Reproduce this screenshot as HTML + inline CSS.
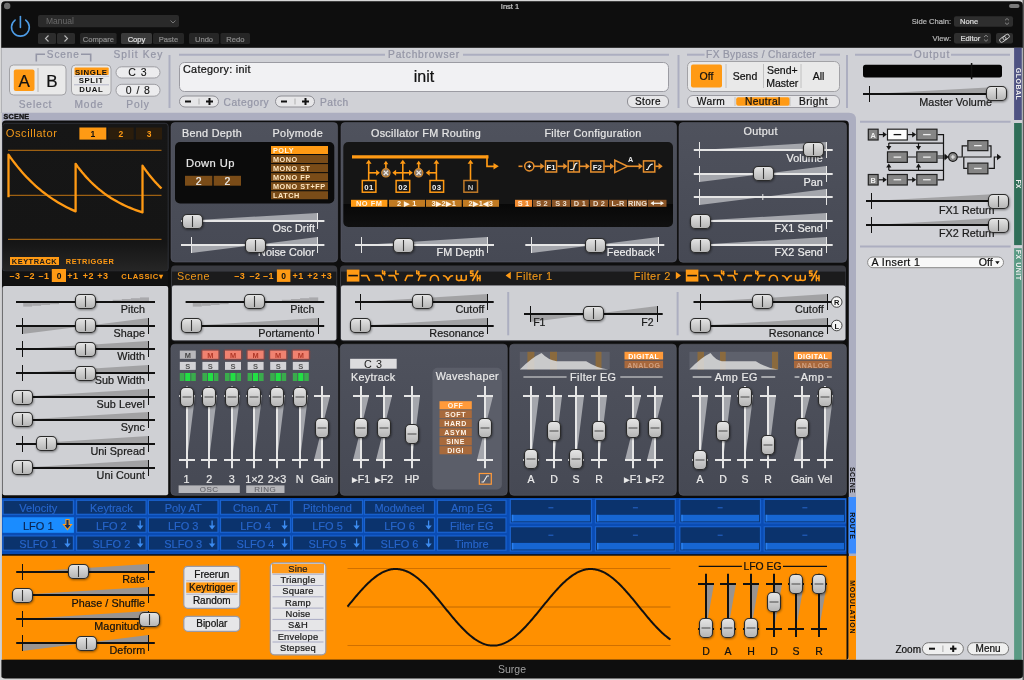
<!DOCTYPE html>
<html><head><meta charset="utf-8"><style>
html,body{margin:0;padding:0;background:#0d0d0d;overflow:hidden;width:1024px;height:680px}
svg{display:block;font-family:"Liberation Sans",sans-serif;will-change:transform}
</style></head><body>
<svg width="1024" height="680" viewBox="0 0 1024 680">
<defs>
<linearGradient id="hg" x1="0" y1="0" x2="0" y2="1"><stop offset="0" stop-color="#e6e6e6"/><stop offset="1" stop-color="#b4b4b4"/></linearGradient>
<linearGradient id="vg" x1="0" y1="0" x2="0" y2="1"><stop offset="0" stop-color="#e6e6e6"/><stop offset="1" stop-color="#b4b4b4"/></linearGradient>
<linearGradient id="oscbg" x1="0" y1="0" x2="0" y2="1"><stop offset="0" stop-color="#161616"/><stop offset="0.8" stop-color="#151515"/><stop offset="1" stop-color="#262626"/></linearGradient>
<linearGradient id="fmbg" x1="0" y1="0" x2="0" y2="1"><stop offset="0" stop-color="#151515"/><stop offset="0.73" stop-color="#151515"/><stop offset="0.735" stop-color="#080808"/><stop offset="1" stop-color="#101010"/></linearGradient>
<linearGradient id="pan" x1="0" y1="0" x2="0" y2="1"><stop offset="0" stop-color="#4f525d"/><stop offset="1" stop-color="#464954"/></linearGradient>
<filter id="sh" x="-30%" y="-30%" width="160%" height="160%"><feDropShadow dx="0.5" dy="1" stdDeviation="0.8" flood-color="#000" flood-opacity="0.45"/></filter>
</defs>
<rect x="0" y="0" width="1024" height="680" fill="#d6d6d6"/>
<rect x="1022.6" y="0" width="1.4" height="680" fill="#5a5a5a"/>
<rect x="1.2" y="1.2" width="1021.6" height="677.4" fill="#0e0e0e" rx="4"/>
<circle cx="7.2" cy="6" r="3.2" fill="#6e6e6e"/>
<text x="510" y="9" font-size="7.5" fill="#c8c8c8" text-anchor="middle" stroke="#c8c8c8" stroke-width="0.22">Inst 1</text>
<rect x="1009" y="4" width="10.5" height="4" fill="#7a7a7a" rx="2"/>
<g>
<path d="M 15.1 20.05 A 8.9 8.9 0 1 0 25.7 20.05" stroke="#4d9ce6" stroke-width="1.6" fill="none" stroke-linecap="round"/>
<line x1="20.4" y1="16.6" x2="20.4" y2="27.5" stroke="#4d9ce6" stroke-width="1.6" stroke-linecap="round"/>
<rect x="38" y="15" width="141" height="12.3" fill="#2a2a2a" rx="2"/>
<text x="46" y="24.4" font-size="8.5" fill="#6a6a6a">Manual</text>
<path d="M 170.5 20.5 L 173 23 L 175.5 20.5" stroke="#777" stroke-width="1" fill="none"/>
<rect x="38" y="33" width="18" height="11" fill="#2c2c2c" rx="1.5"/>
<rect x="57" y="33" width="18" height="11" fill="#2c2c2c" rx="1.5"/>
<path d="M 48.5 35.5 L 45.5 38.5 L 48.5 41.5" stroke="#bbb" stroke-width="1.1" fill="none"/>
<path d="M 64.5 35.5 L 67.5 38.5 L 64.5 41.5" stroke="#bbb" stroke-width="1.1" fill="none"/>
<rect x="80" y="33" width="36.6" height="11" fill="#262626" rx="1.5"/>
<text x="98.3" y="41.7" font-size="7.6" fill="#8a8a8a" text-anchor="middle" stroke="#8a8a8a" stroke-width="0.22">Compare</text>
<rect x="121" y="33" width="31" height="11" fill="#3a3a3a" rx="1.5"/>
<text x="136.5" y="41.7" font-size="7.6" fill="#e0e0e0" text-anchor="middle" stroke="#e0e0e0" stroke-width="0.22">Copy</text>
<rect x="153" y="33" width="31" height="11" fill="#262626" rx="1.5"/>
<text x="168.5" y="41.7" font-size="7.6" fill="#8a8a8a" text-anchor="middle" stroke="#8a8a8a" stroke-width="0.22">Paste</text>
<rect x="189" y="33" width="30" height="11" fill="#262626" rx="1.5"/>
<text x="204" y="41.7" font-size="7.6" fill="#8a8a8a" text-anchor="middle" stroke="#8a8a8a" stroke-width="0.22">Undo</text>
<rect x="220.5" y="33" width="29.5" height="11" fill="#262626" rx="1.5"/>
<text x="235.3" y="41.7" font-size="7.6" fill="#8a8a8a" text-anchor="middle" stroke="#8a8a8a" stroke-width="0.22">Redo</text>
<text x="951" y="24.4" font-size="7.6" fill="#b5b5b5" text-anchor="end" stroke="#b5b5b5" stroke-width="0.22">Side Chain:</text>
<rect x="954" y="16.2" width="59" height="10.5" fill="#2e2e2e" rx="2"/>
<text x="960" y="24.4" font-size="7.6" fill="#dddddd" stroke="#dddddd" stroke-width="0.22">None</text>
<path d="M 1005 20.3 L 1007 18.5 L 1009 20.3 M 1005 22.7 L 1007 24.5 L 1009 22.7" stroke="#999" stroke-width="0.8" fill="none"/>
<text x="951" y="41" font-size="7.6" fill="#b5b5b5" text-anchor="end" stroke="#b5b5b5" stroke-width="0.22">View:</text>
<rect x="954" y="33" width="37" height="10.6" fill="#2e2e2e" rx="2"/>
<text x="960.5" y="41" font-size="7.6" fill="#dddddd" stroke="#dddddd" stroke-width="0.22">Editor</text>
<path d="M 984 37 L 986 35.2 L 988 37 M 984 39.5 L 986 41.3 L 988 39.5" stroke="#999" stroke-width="0.8" fill="none"/>
<rect x="996" y="33" width="17" height="10.6" fill="#2e2e2e" rx="2"/>
<g transform="translate(1004.5,38.3) rotate(-35)"><rect x="-5.5" y="-2" width="7" height="4" rx="2" fill="none" stroke="#d0d0d0" stroke-width="0.9"/><rect x="-1.5" y="-2" width="7" height="4" rx="2" fill="none" stroke="#d0d0d0" stroke-width="0.9"/></g>
</g>
<rect x="1.2" y="47.8" width="1021.6" height="612.2" fill="#d0d1d6"/>
<rect x="1014.1" y="47.8" width="7.7" height="72.2" fill="#4e5282"/>
<text transform="translate(1015.8,84) rotate(90)" font-size="7" font-weight="bold" fill="#eeeeee" text-anchor="middle" letter-spacing="0.5">GLOBAL</text>
<rect x="1014.1" y="123" width="7.7" height="122.1" fill="#2f6e58"/>
<text transform="translate(1015.8,184) rotate(90)" font-size="7" font-weight="bold" fill="#eeeeee" text-anchor="middle">FX</text>
<rect x="1014.1" y="248.2" width="7.7" height="411.8" fill="#5a9a84"/>
<text transform="translate(1015.8,265.2) rotate(90)" font-size="7" font-weight="bold" fill="#eeeeee" text-anchor="middle" letter-spacing="0.5">FX UNIT</text>
<text x="63.3" y="58" font-size="10" fill="#9496a6" text-anchor="middle" letter-spacing="0.9" stroke="#9496a6" stroke-width="0.22">Scene</text>
<path d="M 45 54.2 L 36.3 54.2 L 36.3 61.5" stroke="#9496a6" stroke-width="1.6" fill="none"/>
<path d="M 81 54.2 L 90.7 54.2 L 90.7 61.5" stroke="#9496a6" stroke-width="1.6" fill="none"/>
<text x="138.5" y="58" font-size="10.2" fill="#9496a6" text-anchor="middle" letter-spacing="1.1" stroke="#9496a6" stroke-width="0.22">Split Key</text>
<rect x="9.5" y="65" width="56.5" height="30" fill="#e9e9e9" rx="4" stroke="#a2a2a6" stroke-width="1"/>
<rect x="13.8" y="69.5" width="20.7" height="21.5" fill="#ff9a14" rx="2"/>
<line x1="38" y1="68" x2="38" y2="92" stroke="#b5b5b5" stroke-width="1"/>
<text x="24.2" y="87" font-size="17" fill="#111" text-anchor="middle" stroke="#111" stroke-width="0.22">A</text>
<text x="52" y="87" font-size="17" fill="#111" text-anchor="middle" stroke="#111" stroke-width="0.22">B</text>
<text x="35.5" y="108" font-size="10.2" fill="#9496a6" text-anchor="middle" letter-spacing="0.9" stroke="#9496a6" stroke-width="0.22">Select</text>
<rect x="71.5" y="65" width="39.5" height="30" fill="#e9e9e9" rx="4" stroke="#a2a2a6" stroke-width="1"/>
<rect x="74.5" y="67.5" width="34.2" height="7.5" fill="#ff9a14" rx="1"/>
<line x1="74" y1="76.3" x2="109" y2="76.3" stroke="#c2c4d2" stroke-width="1"/>
<line x1="74" y1="84.8" x2="109" y2="84.8" stroke="#b4b6c8" stroke-width="1"/>
<text x="91.3" y="74.5" font-size="7.8" fill="#111" text-anchor="middle" font-weight="bold" letter-spacing="0.6">SINGLE</text>
<text x="91.3" y="83.2" font-size="7.8" fill="#111" text-anchor="middle" font-weight="bold" letter-spacing="0.6">SPLIT</text>
<text x="91.3" y="91.8" font-size="7.8" fill="#111" text-anchor="middle" font-weight="bold" letter-spacing="0.6">DUAL</text>
<text x="89" y="108" font-size="10.2" fill="#9496a6" text-anchor="middle" letter-spacing="0.9" stroke="#9496a6" stroke-width="0.22">Mode</text>
<rect x="116" y="66.8" width="44" height="11.2" fill="#ececee" rx="5.6" stroke="#9d9da2" stroke-width="1"/>
<text x="138" y="76.2" font-size="10.5" fill="#111" text-anchor="middle" letter-spacing="1" stroke="#111" stroke-width="0.1">C 3</text>
<rect x="116" y="84.3" width="44" height="11.9" fill="#ececee" rx="5.8" stroke="#9d9da2" stroke-width="1"/>
<text x="138.3" y="94" font-size="10.5" fill="#111" text-anchor="middle" letter-spacing="0.9" stroke="#111" stroke-width="0.1">0 / 8</text>
<text x="138" y="108" font-size="10.2" fill="#9496a6" text-anchor="middle" letter-spacing="0.9" stroke="#9496a6" stroke-width="0.22">Poly</text>
<line x1="169.5" y1="55" x2="169.5" y2="108" stroke="#acaec0" stroke-width="2"/>
<text x="424" y="58" font-size="10.2" fill="#9496a6" text-anchor="middle" letter-spacing="0.8" stroke="#9496a6" stroke-width="0.22">Patchbrowser</text>
<line x1="179" y1="54.7" x2="385" y2="54.7" stroke="#acaec0" stroke-width="2"/>
<line x1="463" y1="54.7" x2="669" y2="54.7" stroke="#acaec0" stroke-width="2"/>
<rect x="179.5" y="62.5" width="489" height="29" fill="#f1f1f3" rx="5" stroke="#9b9ba2" stroke-width="1"/>
<text x="183" y="73.3" font-size="10.8" fill="#111" letter-spacing="0.3" stroke="#111" stroke-width="0.22">Category: init</text>
<text x="424" y="81.5" font-size="16" fill="#111" text-anchor="middle" stroke="#111" stroke-width="0.22">init</text>
<rect x="179.5" y="96" width="39" height="11" fill="#e6e6e8" rx="5.5" stroke="#8e8e94" stroke-width="1"/>
<line x1="199" y1="98.5" x2="199" y2="104.5" stroke="#b0b0b0" stroke-width="1"/>
<line x1="185" y1="101.5" x2="191" y2="101.5" stroke="#111" stroke-width="2"/>
<line x1="206" y1="101.5" x2="213" y2="101.5" stroke="#111" stroke-width="2"/>
<line x1="209.5" y1="98" x2="209.5" y2="105" stroke="#111" stroke-width="2"/>
<text x="223.5" y="106" font-size="10.2" fill="#9496a6" letter-spacing="0.55" stroke="#9496a6" stroke-width="0.22">Category</text>
<rect x="275.5" y="96" width="39" height="11" fill="#e6e6e8" rx="5.5" stroke="#8e8e94" stroke-width="1"/>
<line x1="295" y1="98.5" x2="295" y2="104.5" stroke="#b0b0b0" stroke-width="1"/>
<line x1="281" y1="101.5" x2="287" y2="101.5" stroke="#111" stroke-width="2"/>
<line x1="302" y1="101.5" x2="309" y2="101.5" stroke="#111" stroke-width="2"/>
<line x1="305.5" y1="98" x2="305.5" y2="105" stroke="#111" stroke-width="2"/>
<text x="320" y="106" font-size="10.2" fill="#9496a6" letter-spacing="0.55" stroke="#9496a6" stroke-width="0.22">Patch</text>
<rect x="627.5" y="95.5" width="41" height="12" fill="#e6e6e8" rx="5.5" stroke="#8e8e94" stroke-width="1"/>
<text x="648" y="105.3" font-size="10" fill="#111" text-anchor="middle" letter-spacing="0.4" stroke="#111" stroke-width="0.22">Store</text>
<line x1="678.5" y1="55" x2="678.5" y2="108" stroke="#acaec0" stroke-width="2"/>
<text x="761" y="58" font-size="10.2" fill="#9496a6" text-anchor="middle" letter-spacing="0.35" stroke="#9496a6" stroke-width="0.22">FX Bypass / Character</text>
<line x1="687" y1="54.7" x2="704.6" y2="54.7" stroke="#acaec0" stroke-width="2"/>
<line x1="819.7" y1="54.7" x2="840" y2="54.7" stroke="#acaec0" stroke-width="2"/>
<rect x="687.5" y="61.5" width="152" height="30" fill="#e9e9e9" rx="5" stroke="#a2a2a6" stroke-width="1"/>
<rect x="691" y="64.5" width="31" height="23" fill="#ff9a14" rx="2"/>
<line x1="726" y1="64" x2="726" y2="88" stroke="#c0c0c0" stroke-width="1"/>
<line x1="763.5" y1="64" x2="763.5" y2="88" stroke="#c0c0c0" stroke-width="1"/>
<line x1="801" y1="64" x2="801" y2="88" stroke="#c0c0c0" stroke-width="1"/>
<text x="706.5" y="79.8" font-size="10.5" fill="#111" text-anchor="middle" stroke="#111" stroke-width="0.22">Off</text>
<text x="745" y="79.8" font-size="10.5" fill="#111" text-anchor="middle" stroke="#111" stroke-width="0.22">Send</text>
<text x="782.3" y="74.2" font-size="10.5" fill="#111" text-anchor="middle" stroke="#111" stroke-width="0.22">Send+</text>
<text x="782.3" y="86.7" font-size="10.5" fill="#111" text-anchor="middle" stroke="#111" stroke-width="0.22">Master</text>
<text x="818.5" y="79.8" font-size="10.5" fill="#111" text-anchor="middle" stroke="#111" stroke-width="0.22">All</text>
<rect x="687.5" y="95.5" width="152" height="12" fill="#e6e6e8" rx="5.5" stroke="#9b9ba2" stroke-width="1"/>
<rect x="736.2" y="97.2" width="53.6" height="8.6" fill="#ff9a14" rx="2"/>
<line x1="735" y1="97" x2="735" y2="106" stroke="#c0c0c0" stroke-width="1"/>
<line x1="790" y1="97" x2="790" y2="106" stroke="#c0c0c0" stroke-width="1"/>
<text x="711" y="105.2" font-size="10.2" fill="#111" text-anchor="middle" letter-spacing="0.4" stroke="#111" stroke-width="0.22">Warm</text>
<text x="762.8" y="105.2" font-size="10.2" fill="#111" text-anchor="middle" letter-spacing="0.4" stroke="#111" stroke-width="0.22">Neutral</text>
<text x="813.5" y="105.2" font-size="10.2" fill="#111" text-anchor="middle" letter-spacing="0.4" stroke="#111" stroke-width="0.22">Bright</text>
<line x1="847" y1="55" x2="847" y2="108" stroke="#acaec0" stroke-width="2"/>
<text x="932" y="58" font-size="10.2" fill="#9496a6" text-anchor="middle" letter-spacing="1" stroke="#9496a6" stroke-width="0.22">Output</text>
<line x1="855" y1="54.7" x2="912" y2="54.7" stroke="#acaec0" stroke-width="2"/>
<line x1="951" y1="54.7" x2="1010" y2="54.7" stroke="#acaec0" stroke-width="2"/>
<rect x="863" y="64.7" width="139" height="12.8" fill="#050505" rx="2.5"/>
<line x1="971.6" y1="63" x2="971.6" y2="79.2" stroke="#111" stroke-width="1.5"/>
<polygon points="869.5,94 996.5,87 996.5,94" fill="#a2a2a4"/>
<line x1="863" y1="94" x2="1000" y2="94" stroke="#111" stroke-width="2"/>
<line x1="869.5" y1="86" x2="869.5" y2="102" stroke="#111" stroke-width="1"/>
<text x="992" y="105.8" font-size="10.8" fill="#1a1a1a" text-anchor="end" letter-spacing="0.05" stroke="#1a1a1a" stroke-width="0.22">Master Volume</text>
<g filter="url(#sh)">
<rect x="986.5" y="86.5" width="20" height="14" fill="url(#hg)" rx="4.5" stroke="#2a2a2a" stroke-width="1.1"/>
</g>
<line x1="996.5" y1="88" x2="996.5" y2="99" stroke="#383838" stroke-width="1.1"/>
<path d="M 0 112.8 L 849 112.8 Q 856 112.8 856 119.8 L 856 660 L 0 660 Z" fill="#acaec0"/>
<rect x="2" y="120.5" width="846.8" height="539.5" fill="#0e0e0e" rx="4"/>
<rect x="0" y="112.8" width="1.8" height="565.2" fill="#d2d2d2"/>
<text x="3.5" y="119.3" font-size="7.2" fill="#111" font-weight="bold" letter-spacing="0.2" stroke="#111" stroke-width="0.35">SCENE</text>
<text transform="translate(850,493.5) rotate(90)" font-size="7" font-weight="bold" fill="#111" text-anchor="end" letter-spacing="0.5">SCENE</text>
<rect x="2.5" y="123.3" width="165.7" height="148" fill="url(#oscbg)" rx="3" stroke="#2e3038" stroke-width="1"/>
<text x="5.8" y="136.6" font-size="11.2" fill="#f0981a" letter-spacing="0.5">Oscillator</text>
<rect x="79.4" y="127.5" width="26.9" height="12.1" fill="#ff9a14"/>
<rect x="108" y="127.5" width="25.7" height="12.1" fill="#2b1d0c"/>
<rect x="136" y="127.5" width="26" height="12.1" fill="#2b1d0c"/>
<text x="92.8" y="136.6" font-size="8.5" fill="#111" text-anchor="middle" font-weight="bold">1</text>
<text x="120.8" y="136.6" font-size="8.5" fill="#ff9a14" text-anchor="middle" font-weight="bold">2</text>
<text x="149" y="136.6" font-size="8.5" fill="#ff9a14" text-anchor="middle" font-weight="bold">3</text>
<line x1="8" y1="150.3" x2="161.5" y2="150.3" stroke="#c07412" stroke-width="1"/>
<line x1="8" y1="195.3" x2="161.5" y2="195.3" stroke="#c07412" stroke-width="1"/>
<line x1="8" y1="239.3" x2="161.5" y2="239.3" stroke="#c07412" stroke-width="1"/>
<path d="M 8.5 197.3 L 8.50 154.60 L 10.74 157.79 L 12.97 160.85 L 15.21 163.79 L 17.45 166.62 L 19.68 169.33 L 21.92 171.94 L 24.16 174.45 L 26.39 176.86 L 28.63 179.17 L 30.87 181.40 L 33.10 183.53 L 35.34 185.59 L 37.58 187.56 L 39.81 189.45 L 42.05 191.27 L 44.29 193.02 L 46.52 194.70 L 48.76 196.32 L 51.00 197.87 L 53.23 199.36 L 55.47 200.79 L 57.71 202.17 L 59.94 203.49 L 62.18 204.76 L 64.42 205.98 L 66.65 207.15 L 68.89 208.28 L 71.13 209.36 L 73.36 210.40 L 75.60 211.40 L 75.60 163.80 L 77.83 166.84 L 80.06 169.74 L 82.29 172.50 L 84.52 175.12 L 86.75 177.61 L 88.98 179.98 L 91.21 182.24 L 93.44 184.38 L 95.67 186.42 L 97.90 188.36 L 100.13 190.21 L 102.36 191.97 L 104.59 193.64 L 106.82 195.23 L 109.05 196.74 L 111.28 198.18 L 113.51 199.55 L 115.74 200.85 L 117.97 202.09 L 120.20 203.26 L 122.43 204.38 L 124.66 205.45 L 126.89 206.46 L 129.12 207.43 L 131.35 208.34 L 133.58 209.22 L 135.81 210.05 L 138.04 210.83 L 140.27 211.59 L 142.50 212.30 L 142.50 165.70 L 143.13 166.63 L 143.77 167.54 L 144.40 168.44 L 145.03 169.32 L 145.67 170.20 L 146.30 171.06 L 146.93 171.91 L 147.57 172.75 L 148.20 173.58 L 148.83 174.39 L 149.47 175.19 L 150.10 175.99 L 150.73 176.77 L 151.37 177.54 L 152.00 178.29 L 152.63 179.04 L 153.27 179.78 L 153.90 180.51 L 154.53 181.22 L 155.17 181.93 L 155.80 182.63 L 156.43 183.31 L 157.07 183.99 L 157.70 184.66 L 158.33 185.32 L 158.97 185.97 L 159.60 186.61 L 160.23 187.24 L 160.87 187.86 L 161.50 188.47" stroke="#ff9a14" stroke-width="2.3" fill="none" stroke-linejoin="round"/>
<rect x="10" y="257" width="49" height="8" fill="#ff9a14"/>
<text x="34.5" y="264.3" font-size="7.4" fill="#1a1a1a" text-anchor="middle" font-weight="bold" letter-spacing="0.55">KEYTRACK</text>
<text x="65.8" y="264.3" font-size="7.4" fill="#ff9a14" font-weight="bold" letter-spacing="0.5">RETRIGGER</text>
<rect x="2.5" y="271.3" width="165.7" height="14.3" fill="#121212"/>
<rect x="51.8" y="269" width="14.2" height="13" fill="#ff9a14"/>
<text x="15" y="279" font-size="9" fill="#ff9a14" text-anchor="middle" font-weight="bold" letter-spacing="0.5">–3</text>
<text x="29.5" y="279" font-size="9" fill="#ff9a14" text-anchor="middle" font-weight="bold" letter-spacing="0.5">–2</text>
<text x="44" y="279" font-size="9" fill="#ff9a14" text-anchor="middle" font-weight="bold" letter-spacing="0.5">–1</text>
<text x="73" y="279" font-size="9" fill="#ff9a14" text-anchor="middle" font-weight="bold" letter-spacing="0.5">+1</text>
<text x="88.5" y="279" font-size="9" fill="#ff9a14" text-anchor="middle" font-weight="bold" letter-spacing="0.5">+2</text>
<text x="103" y="279" font-size="9" fill="#ff9a14" text-anchor="middle" font-weight="bold" letter-spacing="0.5">+3</text>
<text x="59" y="279" font-size="8.5" fill="#111" text-anchor="middle" font-weight="bold">0</text>
<text x="163.5" y="279" font-size="7.6" fill="#ff9a14" text-anchor="end" font-weight="bold" letter-spacing="0.6">CLASSIC▾</text>
<rect x="2.5" y="286" width="165.7" height="209.3" fill="#cfd0d4" rx="2"/>
<rect x="23.2" y="303" width="8.95" height="3.6" fill="#a9a9ac"/>
<rect x="32.15" y="303" width="8.95" height="2.8" fill="#a9a9ac"/>
<rect x="41.1" y="303" width="8.95" height="2" fill="#a9a9ac"/>
<rect x="50.05" y="303" width="8.95" height="1.2" fill="#a9a9ac"/>
<rect x="112.7" y="299.8" width="9.07" height="1.2" fill="#a9a9ac"/>
<rect x="121.78" y="299" width="9.07" height="2" fill="#a9a9ac"/>
<rect x="130.85" y="298.2" width="9.07" height="2.8" fill="#a9a9ac"/>
<rect x="139.93" y="297.4" width="9.07" height="3.6" fill="#a9a9ac"/>
<line x1="16" y1="302" x2="155" y2="302" stroke="#111" stroke-width="2"/>
<text x="145" y="313" font-size="10.8" fill="#1a1a1a" text-anchor="end" letter-spacing="0.05" stroke="#1a1a1a" stroke-width="0.22">Pitch</text>
<g filter="url(#sh)">
<rect x="75.5" y="294.5" width="20" height="14" fill="url(#hg)" rx="4.5" stroke="#2a2a2a" stroke-width="1.1"/>
</g>
<line x1="85.5" y1="296" x2="85.5" y2="307" stroke="#383838" stroke-width="1.1"/>
<polygon points="22.5,326 22.5,334 85.5,326" fill="#a2a2a4"/>
<polygon points="85.5,326 148.5,318 148.5,326" fill="#a2a2a4"/>
<line x1="16" y1="326" x2="155" y2="326" stroke="#111" stroke-width="2"/>
<line x1="22.5" y1="318" x2="22.5" y2="334" stroke="#111" stroke-width="1"/>
<line x1="148.5" y1="318" x2="148.5" y2="334" stroke="#111" stroke-width="1"/>
<text x="145" y="337" font-size="10.8" fill="#1a1a1a" text-anchor="end" letter-spacing="0.05" stroke="#1a1a1a" stroke-width="0.22">Shape</text>
<g filter="url(#sh)">
<rect x="75.5" y="318.5" width="20" height="14" fill="url(#hg)" rx="4.5" stroke="#2a2a2a" stroke-width="1.1"/>
</g>
<line x1="85.5" y1="320" x2="85.5" y2="331" stroke="#383838" stroke-width="1.1"/>
<polygon points="22.5,349 148.5,341 148.5,349" fill="#a2a2a4"/>
<line x1="16" y1="349" x2="155" y2="349" stroke="#111" stroke-width="2"/>
<line x1="22.5" y1="341" x2="22.5" y2="357" stroke="#111" stroke-width="1"/>
<line x1="148.5" y1="341" x2="148.5" y2="357" stroke="#111" stroke-width="1"/>
<text x="145" y="360" font-size="10.8" fill="#1a1a1a" text-anchor="end" letter-spacing="0.05" stroke="#1a1a1a" stroke-width="0.22">Width</text>
<g filter="url(#sh)">
<rect x="75.5" y="342.5" width="20" height="14" fill="url(#hg)" rx="4.5" stroke="#2a2a2a" stroke-width="1.1"/>
</g>
<line x1="85.5" y1="344" x2="85.5" y2="355" stroke="#383838" stroke-width="1.1"/>
<polygon points="22.5,373 148.5,365 148.5,373" fill="#a2a2a4"/>
<line x1="16" y1="373" x2="155" y2="373" stroke="#111" stroke-width="2"/>
<line x1="22.5" y1="365" x2="22.5" y2="381" stroke="#111" stroke-width="1"/>
<line x1="148.5" y1="365" x2="148.5" y2="381" stroke="#111" stroke-width="1"/>
<text x="145" y="384" font-size="10.8" fill="#1a1a1a" text-anchor="end" letter-spacing="0.05" stroke="#1a1a1a" stroke-width="0.22">Sub Width</text>
<g filter="url(#sh)">
<rect x="75.5" y="366.5" width="20" height="14" fill="url(#hg)" rx="4.5" stroke="#2a2a2a" stroke-width="1.1"/>
</g>
<line x1="85.5" y1="368" x2="85.5" y2="379" stroke="#383838" stroke-width="1.1"/>
<polygon points="16,397 148.5,389 148.5,397" fill="#a2a2a4"/>
<line x1="16" y1="397" x2="155" y2="397" stroke="#111" stroke-width="2"/>
<line x1="148.5" y1="389" x2="148.5" y2="405" stroke="#111" stroke-width="1"/>
<text x="145" y="408" font-size="10.8" fill="#1a1a1a" text-anchor="end" letter-spacing="0.05" stroke="#1a1a1a" stroke-width="0.22">Sub Level</text>
<g filter="url(#sh)">
<rect x="12.5" y="390.5" width="20" height="14" fill="url(#hg)" rx="4.5" stroke="#2a2a2a" stroke-width="1.1"/>
</g>
<line x1="22.5" y1="392" x2="22.5" y2="403" stroke="#383838" stroke-width="1.1"/>
<polygon points="16,420 148.5,412 148.5,420" fill="#a2a2a4"/>
<line x1="16" y1="420" x2="155" y2="420" stroke="#111" stroke-width="2"/>
<line x1="148.5" y1="412" x2="148.5" y2="428" stroke="#111" stroke-width="1"/>
<text x="145" y="431" font-size="10.8" fill="#1a1a1a" text-anchor="end" letter-spacing="0.05" stroke="#1a1a1a" stroke-width="0.22">Sync</text>
<g filter="url(#sh)">
<rect x="12.5" y="412.5" width="20" height="14" fill="url(#hg)" rx="4.5" stroke="#2a2a2a" stroke-width="1.1"/>
</g>
<line x1="22.5" y1="414" x2="22.5" y2="425" stroke="#383838" stroke-width="1.1"/>
<polygon points="22.5,444 148.5,436 148.5,444" fill="#a2a2a4"/>
<line x1="16" y1="444" x2="155" y2="444" stroke="#111" stroke-width="2"/>
<line x1="22.5" y1="436" x2="22.5" y2="452" stroke="#111" stroke-width="1"/>
<line x1="148.5" y1="436" x2="148.5" y2="452" stroke="#111" stroke-width="1"/>
<text x="145" y="455" font-size="10.8" fill="#1a1a1a" text-anchor="end" letter-spacing="0.05" stroke="#1a1a1a" stroke-width="0.22">Uni Spread</text>
<g filter="url(#sh)">
<rect x="36.5" y="436.5" width="20" height="14" fill="url(#hg)" rx="4.5" stroke="#2a2a2a" stroke-width="1.1"/>
</g>
<line x1="46.5" y1="438" x2="46.5" y2="449" stroke="#383838" stroke-width="1.1"/>
<polygon points="16,468 148.5,460 148.5,468" fill="#a2a2a4"/>
<line x1="16" y1="468" x2="155" y2="468" stroke="#111" stroke-width="2"/>
<line x1="148.5" y1="460" x2="148.5" y2="476" stroke="#111" stroke-width="1"/>
<text x="145" y="479" font-size="10.8" fill="#1a1a1a" text-anchor="end" letter-spacing="0.05" stroke="#1a1a1a" stroke-width="0.22">Uni Count</text>
<g filter="url(#sh)">
<rect x="12.5" y="460.5" width="20" height="14" fill="url(#hg)" rx="4.5" stroke="#2a2a2a" stroke-width="1.1"/>
</g>
<line x1="22.5" y1="462" x2="22.5" y2="473" stroke="#383838" stroke-width="1.1"/>
<rect x="171" y="122.6" width="166.6" height="139.4" fill="url(#pan)" rx="4" stroke="#5a5d68" stroke-width="0.6"/>
<text x="182" y="136.5" font-size="10.8" fill="#e6e6e6" letter-spacing="0.3" stroke="#e6e6e6" stroke-width="0.22">Bend Depth</text>
<text x="323" y="136.5" font-size="10.8" fill="#e6e6e6" text-anchor="end" letter-spacing="0.3" stroke="#e6e6e6" stroke-width="0.22">Polymode</text>
<rect x="175" y="142" width="159.3" height="61.4" fill="#0b0b0b" rx="5"/>
<text x="186" y="167" font-size="11.2" fill="#e6e6e6" letter-spacing="0.4" stroke="#e6e6e6" stroke-width="0.22">Down Up</text>
<rect x="185" y="175.8" width="27.3" height="9.9" fill="#7a4c18"/>
<rect x="213.7" y="175.8" width="27.3" height="9.9" fill="#7a4c18"/>
<text x="198.7" y="185" font-size="10.5" fill="#eee" text-anchor="middle" stroke="#eee" stroke-width="0.22">2</text>
<text x="227.3" y="185" font-size="10.5" fill="#eee" text-anchor="middle" stroke="#eee" stroke-width="0.22">2</text>
<rect x="271" y="146" width="57" height="8" fill="#ff9a14"/>
<text x="273" y="153" font-size="7.3" fill="#fff5e0" font-weight="bold" letter-spacing="0.5">POLY</text>
<rect x="271" y="155.05" width="57" height="8" fill="#7a4c18"/>
<text x="273" y="162.05" font-size="7.3" fill="#ffe6c0" font-weight="bold" letter-spacing="0.5">MONO</text>
<rect x="271" y="164.1" width="57" height="8" fill="#7a4c18"/>
<text x="273" y="171.1" font-size="7.3" fill="#ffe6c0" font-weight="bold" letter-spacing="0.5">MONO ST</text>
<rect x="271" y="173.15" width="57" height="8" fill="#7a4c18"/>
<text x="273" y="180.15" font-size="7.3" fill="#ffe6c0" font-weight="bold" letter-spacing="0.5">MONO FP</text>
<rect x="271" y="182.2" width="57" height="8" fill="#7a4c18"/>
<text x="273" y="189.2" font-size="7.3" fill="#ffe6c0" font-weight="bold" letter-spacing="0.5">MONO ST+FP</text>
<rect x="271" y="191.25" width="57" height="8" fill="#7a4c18"/>
<text x="273" y="198.25" font-size="7.3" fill="#ffe6c0" font-weight="bold" letter-spacing="0.5">LATCH</text>
<polygon points="181,221 317.5,213 317.5,221" fill="#a4a6ac"/>
<line x1="181" y1="221" x2="324.4" y2="221" stroke="#e6e6e6" stroke-width="2"/>
<line x1="317.5" y1="213" x2="317.5" y2="229" stroke="#e6e6e6" stroke-width="1"/>
<text x="315" y="231.9" font-size="10.8" fill="#ececec" text-anchor="end" letter-spacing="0.05" stroke="#ececec" stroke-width="0.22">Osc Drift</text>
<g filter="url(#sh)">
<rect x="182.5" y="214.5" width="20" height="14" fill="url(#hg)" rx="4.5" stroke="#2a2a2a" stroke-width="1.1"/>
</g>
<line x1="192.5" y1="216" x2="192.5" y2="227" stroke="#383838" stroke-width="1.1"/>
<polygon points="191.5,245 191.5,253 254.5,245" fill="#a4a6ac"/>
<polygon points="254.5,245 317.5,237 317.5,245" fill="#a4a6ac"/>
<line x1="181" y1="245" x2="324.4" y2="245" stroke="#e6e6e6" stroke-width="2"/>
<line x1="191.5" y1="237" x2="191.5" y2="253" stroke="#e6e6e6" stroke-width="1"/>
<line x1="317.5" y1="237" x2="317.5" y2="253" stroke="#e6e6e6" stroke-width="1"/>
<text x="315" y="255.5" font-size="10.8" fill="#ececec" text-anchor="end" letter-spacing="0.05" stroke="#ececec" stroke-width="0.22">Noise Color</text>
<g filter="url(#sh)">
<rect x="245.5" y="238.5" width="20" height="14" fill="url(#hg)" rx="4.5" stroke="#2a2a2a" stroke-width="1.1"/>
</g>
<line x1="255.5" y1="240" x2="255.5" y2="251" stroke="#383838" stroke-width="1.1"/>
<rect x="341" y="122.6" width="335.6" height="139.4" fill="url(#pan)" rx="4" stroke="#5a5d68" stroke-width="0.6"/>
<text x="426" y="136.5" font-size="10.8" fill="#e6e6e6" text-anchor="middle" letter-spacing="0.3" stroke="#e6e6e6" stroke-width="0.22">Oscillator FM Routing</text>
<text x="593" y="136.5" font-size="10.8" fill="#e6e6e6" text-anchor="middle" letter-spacing="0.3" stroke="#e6e6e6" stroke-width="0.22">Filter Configuration</text>
<rect x="343.3" y="142" width="329.7" height="85" fill="url(#fmbg)" rx="5"/>
<line x1="352" y1="156.8" x2="488.5" y2="156.8" stroke="#ff9a14" stroke-width="3.2"/>
<path d="M 487 155.5 L 487 166.3 L 494.5 166.3" stroke="#ff9a14" stroke-width="1.7" fill="none"/>
<polygon points="493.5,163 493.5,169.6 498.8,166.3" fill="#ff9a14"/>
<line x1="368.7" y1="180.5" x2="368.7" y2="163.3" stroke="#ff9a14" stroke-width="1.6"/>
<polygon points="365.8,163.8 371.6,163.8 368.7,159.8" fill="#ff9a14"/>
<line x1="402.8" y1="180.5" x2="402.8" y2="163.3" stroke="#ff9a14" stroke-width="1.6"/>
<polygon points="399.9,163.8 405.7,163.8 402.8,159.8" fill="#ff9a14"/>
<line x1="436.4" y1="180.5" x2="436.4" y2="163.3" stroke="#ff9a14" stroke-width="1.6"/>
<polygon points="433.5,163.8 439.3,163.8 436.4,159.8" fill="#ff9a14"/>
<line x1="470.5" y1="180.5" x2="470.5" y2="163.3" stroke="#ff9a14" stroke-width="1.6"/>
<polygon points="467.6,163.8 473.4,163.8 470.5,159.8" fill="#ff9a14"/>
<line x1="385.9" y1="168" x2="385.9" y2="163.7" stroke="#ff9a14" stroke-width="1.6"/>
<polygon points="383.5,164.2 388.3,164.2 385.9,160.8" fill="#ff9a14"/>
<circle cx="385.9" cy="172.8" r="4.2" fill="#8c7a68" stroke="#d88a2a" stroke-width="1.1"/>
<path d="M 383.7 170.6 L 388.09999999999997 175 M 388.09999999999997 170.6 L 383.7 175" stroke="#e8e8e8" stroke-width="1.3" fill="none"/>
<line x1="418.7" y1="168" x2="418.7" y2="163.7" stroke="#ff9a14" stroke-width="1.6"/>
<polygon points="416.3,164.2 421.1,164.2 418.7,160.8" fill="#ff9a14"/>
<circle cx="418.7" cy="172.8" r="4.2" fill="#8c7a68" stroke="#d88a2a" stroke-width="1.1"/>
<path d="M 416.5 170.6 L 420.9 175 M 420.9 170.6 L 416.5 175" stroke="#e8e8e8" stroke-width="1.3" fill="none"/>
<line x1="368.7" y1="172.8" x2="376.9" y2="172.8" stroke="#ff9a14" stroke-width="1.6"/>
<polygon points="376.1,169.8 376.1,175.8 379.9,172.8" fill="#ff9a14"/>
<line x1="402.8" y1="172.8" x2="395.3" y2="172.8" stroke="#ff9a14" stroke-width="1.6"/>
<polygon points="396.1,169.8 396.1,175.8 392.3,172.8" fill="#ff9a14"/>
<line x1="402.8" y1="172.8" x2="409.8" y2="172.8" stroke="#ff9a14" stroke-width="1.6"/>
<polygon points="409,169.8 409,175.8 412.8,172.8" fill="#ff9a14"/>
<line x1="436.4" y1="172.8" x2="428.8" y2="172.8" stroke="#ff9a14" stroke-width="1.6"/>
<polygon points="429.6,169.8 429.6,175.8 425.8,172.8" fill="#ff9a14"/>
<rect x="362.3" y="180.5" width="13.6" height="11.7" fill="#161616" stroke="#ff9a14" stroke-width="1.5"/>
<text x="369.1" y="190" font-size="7.8" fill="#f2f2f2" text-anchor="middle" font-weight="bold" letter-spacing="0.4">01</text>
<rect x="396.1" y="180.5" width="13.6" height="11.7" fill="#161616" stroke="#ff9a14" stroke-width="1.5"/>
<text x="402.9" y="190" font-size="7.8" fill="#f2f2f2" text-anchor="middle" font-weight="bold" letter-spacing="0.4">02</text>
<rect x="430" y="180.5" width="13.6" height="11.7" fill="#161616" stroke="#ff9a14" stroke-width="1.5"/>
<text x="436.8" y="190" font-size="7.8" fill="#f2f2f2" text-anchor="middle" font-weight="bold" letter-spacing="0.4">03</text>
<rect x="463.9" y="180.5" width="13.6" height="11.7" fill="#161616" stroke="#c07a28" stroke-width="1.5"/>
<text x="470.7" y="190" font-size="7.8" fill="#c0c0c0" text-anchor="middle" font-weight="bold" letter-spacing="0.4">N</text>
<rect x="351" y="199.8" width="36.4" height="7" fill="#ff9a14"/>
<text x="369.2" y="206.1" font-size="7.4" fill="#fff4e4" text-anchor="middle" font-weight="bold" letter-spacing="0.5">NO FM</text>
<rect x="389" y="199.8" width="36" height="7" fill="#c07a22"/>
<text x="407" y="206.1" font-size="7.4" fill="#fff4e4" text-anchor="middle" font-weight="bold" letter-spacing="0.5">2 ▶ 1</text>
<rect x="426" y="199.8" width="35.7" height="7" fill="#c07a22"/>
<text x="443.85" y="206.1" font-size="7.4" fill="#fff4e4" text-anchor="middle" font-weight="bold" letter-spacing="0.5">3▶2▶1</text>
<rect x="463" y="199.8" width="36" height="7" fill="#c07a22"/>
<text x="481" y="206.1" font-size="7.4" fill="#fff4e4" text-anchor="middle" font-weight="bold" letter-spacing="0.5">2▶1◀3</text>
<polygon points="361.5,245 487.5,237 487.5,245" fill="#a4a6ac"/>
<line x1="355" y1="245" x2="494" y2="245" stroke="#e6e6e6" stroke-width="2"/>
<line x1="361.5" y1="237" x2="361.5" y2="253" stroke="#e6e6e6" stroke-width="1"/>
<line x1="487.5" y1="237" x2="487.5" y2="253" stroke="#e6e6e6" stroke-width="1"/>
<text x="484.4" y="255.5" font-size="10.8" fill="#ececec" text-anchor="end" letter-spacing="0.05" stroke="#ececec" stroke-width="0.22">FM Depth</text>
<g filter="url(#sh)">
<rect x="393.5" y="238.5" width="20" height="14" fill="url(#hg)" rx="4.5" stroke="#2a2a2a" stroke-width="1.1"/>
</g>
<line x1="403.5" y1="240" x2="403.5" y2="251" stroke="#383838" stroke-width="1.1"/>
<line x1="518.5" y1="166.3" x2="522.5" y2="166.3" stroke="#e8902e" stroke-width="1.6"/>
<circle cx="529.3" cy="166.3" r="4.6" fill="none" stroke="#e8902e" stroke-width="1.5"/>
<line x1="527.6" y1="166.3" x2="531" y2="166.3" stroke="#eee" stroke-width="1.1"/>
<line x1="529.3" y1="164.6" x2="529.3" y2="168" stroke="#eee" stroke-width="1.1"/>
<line x1="534" y1="166.3" x2="541.5" y2="166.3" stroke="#e8902e" stroke-width="1.6"/>
<polygon points="540.3,163.1 540.3,169.5 544.5,166.3" fill="#e8902e"/>
<rect x="545.5" y="160.9" width="11.1" height="11.1" fill="#181818" stroke="#e8902e" stroke-width="1.5"/>
<text x="551" y="169.6" font-size="7.8" fill="#f0f0f0" text-anchor="middle" font-weight="bold">F1</text>
<line x1="557.5" y1="166.3" x2="564.5" y2="166.3" stroke="#e8902e" stroke-width="1.6"/>
<polygon points="563.3,163.1 563.3,169.5 567.5,166.3" fill="#e8902e"/>
<rect x="568.2" y="160.9" width="11.2" height="11.1" fill="#181818" stroke="#e8902e" stroke-width="1.5"/>
<line x1="573.8" y1="161" x2="573.8" y2="171.9" stroke="#e8902e" stroke-width="1.1"/>
<path d="M 570.2 169.5 L 572.2 169.5 Q 573.8 169.5 574.5 166 Q 575.2 163.2 577.5 163.2" stroke="#eee" stroke-width="1.2" fill="none"/>
<line x1="580" y1="166.3" x2="586.8" y2="166.3" stroke="#e8902e" stroke-width="1.6"/>
<polygon points="585.6,163.1 585.6,169.5 589.8,166.3" fill="#e8902e"/>
<rect x="590.8" y="160.9" width="13.2" height="11.1" fill="#181818" stroke="#e8902e" stroke-width="1.5"/>
<text x="597.4" y="169.6" font-size="7.8" fill="#f0f0f0" text-anchor="middle" font-weight="bold">F2</text>
<line x1="604.5" y1="166.3" x2="611.2" y2="166.3" stroke="#e8902e" stroke-width="1.6"/>
<polygon points="610,163.1 610,169.5 614.2,166.3" fill="#e8902e"/>
<polygon points="614.8,160.2 614.8,172.6 627.5,166.3" fill="none" stroke="#e8902e" stroke-width="1.5"/>
<text x="630.5" y="162" font-size="7.2" fill="#e8e8e8" text-anchor="middle" font-weight="bold">A</text>
<line x1="627.5" y1="166.3" x2="639.8" y2="166.3" stroke="#e8902e" stroke-width="1.6"/>
<polygon points="638.6,163.1 638.6,169.5 642.8,166.3" fill="#e8902e"/>
<rect x="643.5" y="160.9" width="11.3" height="11.1" fill="#181818" stroke="#e8902e" stroke-width="1.5"/>
<path d="M 646 169.5 L 647.8 169.5 Q 649.5 164.2 652.8 164.2" stroke="#eee" stroke-width="1.2" fill="none"/>
<line x1="655.3" y1="166.3" x2="659.7" y2="166.3" stroke="#e8902e" stroke-width="1.6"/>
<polygon points="658.5,163.1 658.5,169.5 662.7,166.3" fill="#e8902e"/>
<rect x="515" y="199.8" width="17" height="7" fill="#f08a30"/>
<text x="523.5" y="206.1" font-size="7.4" fill="#fff4e8" text-anchor="middle" font-weight="bold" letter-spacing="0.2">S 1</text>
<rect x="533" y="199.8" width="18" height="7" fill="#8a5426"/>
<text x="542" y="206.1" font-size="7.4" fill="#eadccc" text-anchor="middle" font-weight="bold" letter-spacing="0.2">S 2</text>
<rect x="552" y="199.8" width="18" height="7" fill="#8a5426"/>
<text x="561" y="206.1" font-size="7.4" fill="#eadccc" text-anchor="middle" font-weight="bold" letter-spacing="0.2">S 3</text>
<rect x="571" y="199.8" width="17.8" height="7" fill="#8a5426"/>
<text x="579.9" y="206.1" font-size="7.4" fill="#eadccc" text-anchor="middle" font-weight="bold" letter-spacing="0.2">D 1</text>
<rect x="590" y="199.8" width="18" height="7" fill="#8a5426"/>
<text x="599" y="206.1" font-size="7.4" fill="#eadccc" text-anchor="middle" font-weight="bold" letter-spacing="0.2">D 2</text>
<rect x="609" y="199.8" width="18" height="7" fill="#8a5426"/>
<text x="618" y="206.1" font-size="7.4" fill="#eadccc" text-anchor="middle" font-weight="bold" letter-spacing="0.2">L-R</text>
<rect x="628" y="199.8" width="19.3" height="7" fill="#8a5426"/>
<text x="637.65" y="206.1" font-size="7.4" fill="#eadccc" text-anchor="middle" font-weight="bold" letter-spacing="0.2">RING</text>
<rect x="648" y="199.8" width="18.5" height="7" fill="#8a5426"/>
<line x1="651.5" y1="203.3" x2="663" y2="203.3" stroke="#f4efe8" stroke-width="1.3"/>
<polygon points="650.5,203.3 654,201.1 654,205.5" fill="#f4efe8"/>
<polygon points="664,203.3 660.5,201.1 660.5,205.5" fill="#f4efe8"/>
<polygon points="531.5,245 531.5,253 595,245" fill="#a4a6ac"/>
<polygon points="595,245 658.5,237 658.5,245" fill="#a4a6ac"/>
<line x1="525.3" y1="245" x2="664.3" y2="245" stroke="#e6e6e6" stroke-width="2"/>
<line x1="531.5" y1="237" x2="531.5" y2="253" stroke="#e6e6e6" stroke-width="1"/>
<line x1="658.5" y1="237" x2="658.5" y2="253" stroke="#e6e6e6" stroke-width="1"/>
<text x="654.6" y="255.5" font-size="10.8" fill="#ececec" text-anchor="end" letter-spacing="0.05" stroke="#ececec" stroke-width="0.22">Feedback</text>
<g filter="url(#sh)">
<rect x="585.5" y="238.5" width="20" height="14" fill="url(#hg)" rx="4.5" stroke="#2a2a2a" stroke-width="1.1"/>
</g>
<line x1="595.5" y1="240" x2="595.5" y2="251" stroke="#383838" stroke-width="1.1"/>
<rect x="679" y="122.6" width="167.6" height="139.7" fill="url(#pan)" rx="4" stroke="#5a5d68" stroke-width="0.6"/>
<text x="760.6" y="135" font-size="10.8" fill="#e6e6e6" text-anchor="middle" letter-spacing="0.3" stroke="#e6e6e6" stroke-width="0.22">Output</text>
<polygon points="699.5,150 826.5,142 826.5,150" fill="#a4a6ac"/>
<line x1="693.8" y1="150" x2="832.7" y2="150" stroke="#e6e6e6" stroke-width="2"/>
<line x1="699.5" y1="142" x2="699.5" y2="158" stroke="#e6e6e6" stroke-width="1"/>
<line x1="826.5" y1="142" x2="826.5" y2="158" stroke="#e6e6e6" stroke-width="1"/>
<text x="822.8" y="162" font-size="10.8" fill="#ececec" text-anchor="end" letter-spacing="0.05" stroke="#ececec" stroke-width="0.22">Volume</text>
<g filter="url(#sh)">
<rect x="803.5" y="142.5" width="20" height="14" fill="url(#hg)" rx="4.5" stroke="#2a2a2a" stroke-width="1.1"/>
</g>
<line x1="813.5" y1="144" x2="813.5" y2="155" stroke="#383838" stroke-width="1.1"/>
<polygon points="699.5,174 699.5,182 763,174" fill="#a4a6ac"/>
<polygon points="763,174 826.5,166 826.5,174" fill="#a4a6ac"/>
<line x1="693.8" y1="174" x2="832.7" y2="174" stroke="#e6e6e6" stroke-width="2"/>
<line x1="699.5" y1="166" x2="699.5" y2="182" stroke="#e6e6e6" stroke-width="1"/>
<line x1="826.5" y1="166" x2="826.5" y2="182" stroke="#e6e6e6" stroke-width="1"/>
<text x="822.8" y="185.5" font-size="10.8" fill="#ececec" text-anchor="end" letter-spacing="0.05" stroke="#ececec" stroke-width="0.22">Pan</text>
<g filter="url(#sh)">
<rect x="753.5" y="166.5" width="20" height="14" fill="url(#hg)" rx="4.5" stroke="#2a2a2a" stroke-width="1.1"/>
</g>
<line x1="763.5" y1="168" x2="763.5" y2="179" stroke="#383838" stroke-width="1.1"/>
<polygon points="699.5,197 699.5,205 763,197" fill="#a4a6ac"/>
<polygon points="763,197 826.5,189 826.5,197" fill="#a4a6ac"/>
<line x1="693.8" y1="197" x2="832.7" y2="197" stroke="#e6e6e6" stroke-width="2"/>
<line x1="699.5" y1="189" x2="699.5" y2="205" stroke="#e6e6e6" stroke-width="1"/>
<line x1="826.5" y1="189" x2="826.5" y2="205" stroke="#e6e6e6" stroke-width="1"/>
<line x1="762.8" y1="194" x2="762.8" y2="200" stroke="#e6e6e6" stroke-width="1"/>
<polygon points="693.8,221 826.5,213 826.5,221" fill="#a4a6ac"/>
<line x1="693.8" y1="221" x2="832.7" y2="221" stroke="#e6e6e6" stroke-width="2"/>
<line x1="826.5" y1="213" x2="826.5" y2="229" stroke="#e6e6e6" stroke-width="1"/>
<text x="822.8" y="231.9" font-size="10.8" fill="#ececec" text-anchor="end" letter-spacing="0.05" stroke="#ececec" stroke-width="0.22">FX1 Send</text>
<g filter="url(#sh)">
<rect x="690.5" y="214.5" width="20" height="14" fill="url(#hg)" rx="4.5" stroke="#2a2a2a" stroke-width="1.1"/>
</g>
<line x1="700.5" y1="216" x2="700.5" y2="227" stroke="#383838" stroke-width="1.1"/>
<polygon points="693.8,245 826.5,237 826.5,245" fill="#a4a6ac"/>
<line x1="693.8" y1="245" x2="832.7" y2="245" stroke="#e6e6e6" stroke-width="2"/>
<line x1="826.5" y1="237" x2="826.5" y2="253" stroke="#e6e6e6" stroke-width="1"/>
<text x="822.8" y="255.5" font-size="10.8" fill="#ececec" text-anchor="end" letter-spacing="0.05" stroke="#ececec" stroke-width="0.22">FX2 Send</text>
<g filter="url(#sh)">
<rect x="690.5" y="238.5" width="20" height="14" fill="url(#hg)" rx="4.5" stroke="#2a2a2a" stroke-width="1.1"/>
</g>
<line x1="700.5" y1="240" x2="700.5" y2="251" stroke="#383838" stroke-width="1.1"/>
<rect x="171.1" y="265.5" width="166.1" height="75.8" fill="#3a3b41" rx="4"/>
<rect x="172" y="271.6" width="164.3" height="13.8" fill="#1b1b1c"/>
<text x="177" y="279.7" font-size="10.8" fill="#f0981a" letter-spacing="0.5">Scene</text>
<rect x="276.9" y="269.5" width="13.5" height="12.4" fill="#ff9a14"/>
<text x="239.8" y="278.6" font-size="9" fill="#ff9a14" text-anchor="middle" font-weight="bold" letter-spacing="0.5">–3</text>
<text x="255" y="278.6" font-size="9" fill="#ff9a14" text-anchor="middle" font-weight="bold" letter-spacing="0.5">–2</text>
<text x="268.6" y="278.6" font-size="9" fill="#ff9a14" text-anchor="middle" font-weight="bold" letter-spacing="0.5">–1</text>
<text x="298.2" y="278.6" font-size="9" fill="#ff9a14" text-anchor="middle" font-weight="bold" letter-spacing="0.5">+1</text>
<text x="313" y="278.6" font-size="9" fill="#ff9a14" text-anchor="middle" font-weight="bold" letter-spacing="0.5">+2</text>
<text x="326.6" y="278.6" font-size="9" fill="#ff9a14" text-anchor="middle" font-weight="bold" letter-spacing="0.5">+3</text>
<text x="283.6" y="278.6" font-size="8.5" fill="#111" text-anchor="middle" font-weight="bold">0</text>
<rect x="172" y="285.6" width="164.3" height="54.7" fill="#cfd0d4" rx="2"/>
<rect x="192.8" y="303" width="8.95" height="3.6" fill="#a9a9ac"/>
<rect x="201.75" y="303" width="8.95" height="2.8" fill="#a9a9ac"/>
<rect x="210.7" y="303" width="8.95" height="2" fill="#a9a9ac"/>
<rect x="219.65" y="303" width="8.95" height="1.2" fill="#a9a9ac"/>
<rect x="281.9" y="299.8" width="9.08" height="1.2" fill="#a9a9ac"/>
<rect x="290.97" y="299" width="9.08" height="2" fill="#a9a9ac"/>
<rect x="300.05" y="298.2" width="9.08" height="2.8" fill="#a9a9ac"/>
<rect x="309.12" y="297.4" width="9.08" height="3.6" fill="#a9a9ac"/>
<line x1="185.6" y1="302" x2="324.2" y2="302" stroke="#111" stroke-width="2"/>
<text x="314.6" y="313" font-size="10.8" fill="#1a1a1a" text-anchor="end" letter-spacing="0.05" stroke="#1a1a1a" stroke-width="0.22">Pitch</text>
<g filter="url(#sh)">
<rect x="244.5" y="294.5" width="20" height="14" fill="url(#hg)" rx="4.5" stroke="#2a2a2a" stroke-width="1.1"/>
</g>
<line x1="254.5" y1="296" x2="254.5" y2="307" stroke="#383838" stroke-width="1.1"/>
<polygon points="185.6,326 318.5,318 318.5,326" fill="#a2a2a4"/>
<line x1="185.6" y1="326" x2="324.2" y2="326" stroke="#111" stroke-width="2"/>
<line x1="318.5" y1="318" x2="318.5" y2="334" stroke="#111" stroke-width="1"/>
<text x="314.6" y="336.8" font-size="10.8" fill="#1a1a1a" text-anchor="end" letter-spacing="0.05" stroke="#1a1a1a" stroke-width="0.22">Portamento</text>
<g filter="url(#sh)">
<rect x="181.5" y="318.5" width="20" height="14" fill="url(#hg)" rx="4.5" stroke="#2a2a2a" stroke-width="1.1"/>
</g>
<line x1="191.5" y1="320" x2="191.5" y2="331" stroke="#383838" stroke-width="1.1"/>
<rect x="340" y="265.5" width="506" height="75.8" fill="#3a3b41" rx="4"/>
<rect x="341" y="271.6" width="504.4" height="13.8" fill="#1b1b1c"/>
<rect x="346.8" y="269.6" width="12.6" height="12" fill="#ff9a14"/>
<line x1="348.3" y1="275.6" x2="357.9" y2="275.6" stroke="#111" stroke-width="1.6"/>
<path d="M 361.60 275.60 L 367.10 275.60 L 369.40 280.30" stroke="#ff9a14" stroke-width="1.6" fill="none" stroke-linecap="round" stroke-linejoin="round"/>
<path d="M 375.30 275.60 L 380.70 275.60 L 382.70 280.30" stroke="#ff9a14" stroke-width="1.6" fill="none" stroke-linecap="round" stroke-linejoin="round"/>
<path d="M 382.60 270.80 L 382.60 273.60 L 385.00 273.60 M 384.60 271.50 L 384.60 275.00" stroke="#ff9a14" stroke-width="1.6" fill="none" stroke-linecap="round" stroke-linejoin="round"/>
<path d="M 388.90 275.60 L 394.40 275.60 L 396.40 280.30" stroke="#ff9a14" stroke-width="1.6" fill="none" stroke-linecap="round" stroke-linejoin="round"/>
<path d="M 395.80 270.80 L 395.80 274.00 L 398.40 274.00" stroke="#ff9a14" stroke-width="1.6" fill="none" stroke-linecap="round" stroke-linejoin="round"/>
<path d="M 405.20 280.30 L 407.30 275.60 L 412.50 275.60" stroke="#ff9a14" stroke-width="1.6" fill="none" stroke-linecap="round" stroke-linejoin="round"/>
<path d="M 418.40 280.30 L 420.30 275.60 L 425.80 275.60" stroke="#ff9a14" stroke-width="1.6" fill="none" stroke-linecap="round" stroke-linejoin="round"/>
<path d="M 416.80 270.80 L 416.80 273.60 L 419.20 273.60 M 418.80 271.50 L 418.80 275.00" stroke="#ff9a14" stroke-width="1.6" fill="none" stroke-linecap="round" stroke-linejoin="round"/>
<path d="M 430.30 280.50 Q 430.30 275.20 434.40 275.20 Q 438.50 275.20 438.50 280.50" stroke="#ff9a14" stroke-width="1.6" fill="none" stroke-linecap="round" stroke-linejoin="round"/>
<path d="M 443.50 275.80 Q 446.50 275.80 448.00 280.20 Q 449.50 275.80 452.50 275.80" stroke="#ff9a14" stroke-width="1.6" fill="none" stroke-linecap="round" stroke-linejoin="round"/>
<path d="M 456.60 275.60 L 456.60 279.60 Q 459.00 281.50 461.30 279.60 L 461.30 275.60 M 461.30 279.60 Q 463.80 281.50 466.20 279.60 L 466.20 275.60" stroke="#ff9a14" stroke-width="1.6" fill="none" stroke-linecap="round" stroke-linejoin="round"/>
<path d="M 473.00 271.00 L 470.60 271.00 L 470.60 273.40 L 473.00 273.40 L 473.00 275.80 L 470.60 275.80" stroke="#ff9a14" stroke-width="1.6" fill="none" stroke-linecap="round" stroke-linejoin="round"/>
<path d="M 472.60 280.50 L 477.80 271.00" stroke="#ff9a14" stroke-width="1.6" fill="none" stroke-linecap="round" stroke-linejoin="round"/>
<path d="M 477.40 275.60 L 477.40 280.80 M 480.00 275.60 L 480.00 280.80 M 477.40 278.20 L 480.00 278.20" stroke="#ff9a14" stroke-width="1.6" fill="none" stroke-linecap="round" stroke-linejoin="round"/>
<rect x="685.8" y="269.6" width="12.6" height="12" fill="#ff9a14"/>
<line x1="687.3" y1="275.6" x2="696.9" y2="275.6" stroke="#111" stroke-width="1.6"/>
<path d="M 700.60 275.60 L 706.10 275.60 L 708.40 280.30" stroke="#ff9a14" stroke-width="1.6" fill="none" stroke-linecap="round" stroke-linejoin="round"/>
<path d="M 714.30 275.60 L 719.70 275.60 L 721.70 280.30" stroke="#ff9a14" stroke-width="1.6" fill="none" stroke-linecap="round" stroke-linejoin="round"/>
<path d="M 721.60 270.80 L 721.60 273.60 L 724.00 273.60 M 723.60 271.50 L 723.60 275.00" stroke="#ff9a14" stroke-width="1.6" fill="none" stroke-linecap="round" stroke-linejoin="round"/>
<path d="M 727.90 275.60 L 733.40 275.60 L 735.40 280.30" stroke="#ff9a14" stroke-width="1.6" fill="none" stroke-linecap="round" stroke-linejoin="round"/>
<path d="M 734.80 270.80 L 734.80 274.00 L 737.40 274.00" stroke="#ff9a14" stroke-width="1.6" fill="none" stroke-linecap="round" stroke-linejoin="round"/>
<path d="M 744.20 280.30 L 746.30 275.60 L 751.50 275.60" stroke="#ff9a14" stroke-width="1.6" fill="none" stroke-linecap="round" stroke-linejoin="round"/>
<path d="M 757.40 280.30 L 759.30 275.60 L 764.80 275.60" stroke="#ff9a14" stroke-width="1.6" fill="none" stroke-linecap="round" stroke-linejoin="round"/>
<path d="M 755.80 270.80 L 755.80 273.60 L 758.20 273.60 M 757.80 271.50 L 757.80 275.00" stroke="#ff9a14" stroke-width="1.6" fill="none" stroke-linecap="round" stroke-linejoin="round"/>
<path d="M 769.30 280.50 Q 769.30 275.20 773.40 275.20 Q 777.50 275.20 777.50 280.50" stroke="#ff9a14" stroke-width="1.6" fill="none" stroke-linecap="round" stroke-linejoin="round"/>
<path d="M 782.50 275.80 Q 785.50 275.80 787.00 280.20 Q 788.50 275.80 791.50 275.80" stroke="#ff9a14" stroke-width="1.6" fill="none" stroke-linecap="round" stroke-linejoin="round"/>
<path d="M 795.60 275.60 L 795.60 279.60 Q 798.00 281.50 800.30 279.60 L 800.30 275.60 M 800.30 279.60 Q 802.80 281.50 805.20 279.60 L 805.20 275.60" stroke="#ff9a14" stroke-width="1.6" fill="none" stroke-linecap="round" stroke-linejoin="round"/>
<path d="M 812.00 271.00 L 809.60 271.00 L 809.60 273.40 L 812.00 273.40 L 812.00 275.80 L 809.60 275.80" stroke="#ff9a14" stroke-width="1.6" fill="none" stroke-linecap="round" stroke-linejoin="round"/>
<path d="M 811.60 280.50 L 816.80 271.00" stroke="#ff9a14" stroke-width="1.6" fill="none" stroke-linecap="round" stroke-linejoin="round"/>
<path d="M 816.40 275.60 L 816.40 280.80 M 819.00 275.60 L 819.00 280.80 M 816.40 278.20 L 819.00 278.20" stroke="#ff9a14" stroke-width="1.6" fill="none" stroke-linecap="round" stroke-linejoin="round"/>
<polygon points="505.6,275.5 510.8,271.8 510.8,279.2" fill="#ff9a14"/>
<text x="515.8" y="279.5" font-size="11" fill="#f0981a" letter-spacing="0.4" stroke="#f0981a" stroke-width="0.1">Filter 1</text>
<polygon points="681,275.5 675.8,271.8 675.8,279.2" fill="#ff9a14"/>
<text x="670.7" y="279.5" font-size="11" fill="#f0981a" text-anchor="end" letter-spacing="0.4" stroke="#f0981a" stroke-width="0.1">Filter 2</text>
<rect x="341" y="285.6" width="504.4" height="54.7" fill="#cfd0d4" rx="2"/>
<polygon points="360.5,302 487.5,294 487.5,302" fill="#a2a2a4"/>
<line x1="355" y1="302" x2="493.7" y2="302" stroke="#111" stroke-width="2"/>
<line x1="360.5" y1="294" x2="360.5" y2="310" stroke="#111" stroke-width="1"/>
<line x1="487.5" y1="294" x2="487.5" y2="310" stroke="#111" stroke-width="1"/>
<text x="484.4" y="313.3" font-size="10.8" fill="#1a1a1a" text-anchor="end" letter-spacing="0.05" stroke="#1a1a1a" stroke-width="0.22">Cutoff</text>
<g filter="url(#sh)">
<rect x="412.5" y="294.5" width="20" height="14" fill="url(#hg)" rx="4.5" stroke="#2a2a2a" stroke-width="1.1"/>
</g>
<line x1="422.5" y1="296" x2="422.5" y2="307" stroke="#383838" stroke-width="1.1"/>
<polygon points="355,326 487.5,318 487.5,326" fill="#a2a2a4"/>
<line x1="355" y1="326" x2="493.7" y2="326" stroke="#111" stroke-width="2"/>
<line x1="487.5" y1="318" x2="487.5" y2="334" stroke="#111" stroke-width="1"/>
<text x="484.4" y="336.5" font-size="10.8" fill="#1a1a1a" text-anchor="end" letter-spacing="0.05" stroke="#1a1a1a" stroke-width="0.22">Resonance</text>
<g filter="url(#sh)">
<rect x="350.5" y="318.5" width="20" height="14" fill="url(#hg)" rx="4.5" stroke="#2a2a2a" stroke-width="1.1"/>
</g>
<line x1="360.5" y1="320" x2="360.5" y2="331" stroke="#383838" stroke-width="1.1"/>
<line x1="508.2" y1="292" x2="508.2" y2="335.3" stroke="#acaec0" stroke-width="2"/>
<polygon points="530.5,314 530.5,322 594,314" fill="#a2a2a4"/>
<polygon points="594,314 657.5,306 657.5,314" fill="#a2a2a4"/>
<line x1="524" y1="314" x2="662.7" y2="314" stroke="#111" stroke-width="2"/>
<line x1="530.5" y1="306" x2="530.5" y2="322" stroke="#111" stroke-width="1"/>
<line x1="657.5" y1="306" x2="657.5" y2="322" stroke="#111" stroke-width="1"/>
<g filter="url(#sh)">
<rect x="583.5" y="306.5" width="20" height="14" fill="url(#hg)" rx="4.5" stroke="#2a2a2a" stroke-width="1.1"/>
</g>
<line x1="593.5" y1="308" x2="593.5" y2="319" stroke="#383838" stroke-width="1.1"/>
<text x="533.2" y="325.5" font-size="10.5" fill="#1a1a1a" stroke="#1a1a1a" stroke-width="0.22">F1</text>
<text x="653.5" y="325.5" font-size="10.5" fill="#1a1a1a" text-anchor="end" stroke="#1a1a1a" stroke-width="0.22">F2</text>
<line x1="677.6" y1="292" x2="677.6" y2="335.3" stroke="#acaec0" stroke-width="2"/>
<polygon points="700.5,302 827.5,294 827.5,302" fill="#a2a2a4"/>
<line x1="693.5" y1="302" x2="832.2" y2="302" stroke="#111" stroke-width="2"/>
<line x1="700.5" y1="294" x2="700.5" y2="310" stroke="#111" stroke-width="1"/>
<line x1="827.5" y1="294" x2="827.5" y2="310" stroke="#111" stroke-width="1"/>
<text x="823.9" y="313.3" font-size="10.8" fill="#1a1a1a" text-anchor="end" letter-spacing="0.05" stroke="#1a1a1a" stroke-width="0.22">Cutoff</text>
<g filter="url(#sh)">
<rect x="752.5" y="294.5" width="20" height="14" fill="url(#hg)" rx="4.5" stroke="#2a2a2a" stroke-width="1.1"/>
</g>
<line x1="762.5" y1="296" x2="762.5" y2="307" stroke="#383838" stroke-width="1.1"/>
<polygon points="693.5,326 827.5,318 827.5,326" fill="#a2a2a4"/>
<line x1="693.5" y1="326" x2="832.2" y2="326" stroke="#111" stroke-width="2"/>
<line x1="827.5" y1="318" x2="827.5" y2="334" stroke="#111" stroke-width="1"/>
<text x="823.9" y="336.5" font-size="10.8" fill="#1a1a1a" text-anchor="end" letter-spacing="0.05" stroke="#1a1a1a" stroke-width="0.22">Resonance</text>
<g filter="url(#sh)">
<rect x="690.5" y="318.5" width="20" height="14" fill="url(#hg)" rx="4.5" stroke="#2a2a2a" stroke-width="1.1"/>
</g>
<line x1="700.5" y1="320" x2="700.5" y2="331" stroke="#383838" stroke-width="1.1"/>
<circle cx="836.7" cy="302" r="5.3" fill="#f4f4f4" stroke="#333" stroke-width="0.9"/>
<text x="836.7" y="305" font-size="7.5" fill="#111" text-anchor="middle" font-weight="bold">R</text>
<circle cx="836.7" cy="325.5" r="5.3" fill="#f4f4f4" stroke="#333" stroke-width="0.9"/>
<text x="836.7" y="328.5" font-size="7.5" fill="#111" text-anchor="middle" font-weight="bold">L</text>
<rect x="170.9" y="344.2" width="167" height="151.1" fill="url(#pan)" rx="4" stroke="#5a5d68" stroke-width="0.6"/>
<rect x="179.8" y="350.6" width="16" height="8.2" fill="#b8b8bc"/>
<text x="187.8" y="357.9" font-size="7.4" fill="#444" text-anchor="middle" font-weight="bold">M</text>
<rect x="179.8" y="361.9" width="16" height="8" fill="#d2d2d6"/>
<text x="187.8" y="368.9" font-size="7.6" fill="#555" text-anchor="middle" font-weight="bold">S</text>
<rect x="179.8" y="373" width="4.6" height="8" fill="#3aac4c"/>
<rect x="185.2" y="373" width="5.2" height="8" fill="#22e044"/>
<rect x="191.2" y="373" width="4.6" height="8" fill="#3aac4c"/>
<polygon points="187,460 195,396 187,396" fill="#a4a6ac"/>
<line x1="187" y1="386.6" x2="187" y2="468.2" stroke="#e6e6e6" stroke-width="2"/>
<line x1="179" y1="396" x2="195" y2="396" stroke="#e6e6e6" stroke-width="2"/>
<line x1="179" y1="460" x2="195" y2="460" stroke="#e6e6e6" stroke-width="2"/>
<g filter="url(#sh)">
<rect x="180.5" y="387.5" width="13" height="19" fill="url(#vg)" rx="4.5" stroke="#2a2a2a" stroke-width="1.1"/>
</g>
<line x1="182.5" y1="397" x2="191.5" y2="397" stroke="#555" stroke-width="1.1"/>
<rect x="200.9" y="349.2" width="19" height="11" fill="#a04038" rx="2" opacity="0.55"/>
<rect x="202.4" y="350.6" width="16" height="8.2" fill="#f08270"/>
<text x="210.4" y="357.9" font-size="7.4" fill="#b03828" text-anchor="middle" font-weight="bold">M</text>
<rect x="202.4" y="361.9" width="16" height="8" fill="#d2d2d6"/>
<text x="210.4" y="368.9" font-size="7.6" fill="#555" text-anchor="middle" font-weight="bold">S</text>
<rect x="202.4" y="373" width="4.6" height="8" fill="#3aac4c"/>
<rect x="207.8" y="373" width="5.2" height="8" fill="#22e044"/>
<rect x="213.8" y="373" width="4.6" height="8" fill="#3aac4c"/>
<polygon points="209,460 217,396 209,396" fill="#a4a6ac"/>
<line x1="209" y1="386.6" x2="209" y2="468.2" stroke="#e6e6e6" stroke-width="2"/>
<line x1="201" y1="396" x2="217" y2="396" stroke="#e6e6e6" stroke-width="2"/>
<line x1="201" y1="460" x2="217" y2="460" stroke="#e6e6e6" stroke-width="2"/>
<g filter="url(#sh)">
<rect x="202.5" y="387.5" width="13" height="19" fill="url(#vg)" rx="4.5" stroke="#2a2a2a" stroke-width="1.1"/>
</g>
<line x1="204.5" y1="397" x2="213.5" y2="397" stroke="#555" stroke-width="1.1"/>
<rect x="223.5" y="349.2" width="19" height="11" fill="#a04038" rx="2" opacity="0.55"/>
<rect x="225" y="350.6" width="16" height="8.2" fill="#f08270"/>
<text x="233" y="357.9" font-size="7.4" fill="#b03828" text-anchor="middle" font-weight="bold">M</text>
<rect x="225" y="361.9" width="16" height="8" fill="#d2d2d6"/>
<text x="233" y="368.9" font-size="7.6" fill="#555" text-anchor="middle" font-weight="bold">S</text>
<rect x="225" y="373" width="4.6" height="8" fill="#3aac4c"/>
<rect x="230.4" y="373" width="5.2" height="8" fill="#22e044"/>
<rect x="236.4" y="373" width="4.6" height="8" fill="#3aac4c"/>
<polygon points="232,460 240,396 232,396" fill="#a4a6ac"/>
<line x1="232" y1="386.6" x2="232" y2="468.2" stroke="#e6e6e6" stroke-width="2"/>
<line x1="224" y1="396" x2="240" y2="396" stroke="#e6e6e6" stroke-width="2"/>
<line x1="224" y1="460" x2="240" y2="460" stroke="#e6e6e6" stroke-width="2"/>
<g filter="url(#sh)">
<rect x="225.5" y="387.5" width="13" height="19" fill="url(#vg)" rx="4.5" stroke="#2a2a2a" stroke-width="1.1"/>
</g>
<line x1="227.5" y1="397" x2="236.5" y2="397" stroke="#555" stroke-width="1.1"/>
<rect x="246.1" y="349.2" width="19" height="11" fill="#a04038" rx="2" opacity="0.55"/>
<rect x="247.6" y="350.6" width="16" height="8.2" fill="#f08270"/>
<text x="255.6" y="357.9" font-size="7.4" fill="#b03828" text-anchor="middle" font-weight="bold">M</text>
<rect x="247.6" y="361.9" width="16" height="8" fill="#d2d2d6"/>
<text x="255.6" y="368.9" font-size="7.6" fill="#555" text-anchor="middle" font-weight="bold">S</text>
<rect x="247.6" y="373" width="4.6" height="8" fill="#3aac4c"/>
<rect x="253" y="373" width="5.2" height="8" fill="#22e044"/>
<rect x="259" y="373" width="4.6" height="8" fill="#3aac4c"/>
<polygon points="254,460 262,396 254,396" fill="#a4a6ac"/>
<line x1="254" y1="386.6" x2="254" y2="468.2" stroke="#e6e6e6" stroke-width="2"/>
<line x1="246" y1="396" x2="262" y2="396" stroke="#e6e6e6" stroke-width="2"/>
<line x1="246" y1="460" x2="262" y2="460" stroke="#e6e6e6" stroke-width="2"/>
<g filter="url(#sh)">
<rect x="247.5" y="387.5" width="13" height="19" fill="url(#vg)" rx="4.5" stroke="#2a2a2a" stroke-width="1.1"/>
</g>
<line x1="249.5" y1="397" x2="258.5" y2="397" stroke="#555" stroke-width="1.1"/>
<rect x="268.7" y="349.2" width="19" height="11" fill="#a04038" rx="2" opacity="0.55"/>
<rect x="270.2" y="350.6" width="16" height="8.2" fill="#f08270"/>
<text x="278.2" y="357.9" font-size="7.4" fill="#b03828" text-anchor="middle" font-weight="bold">M</text>
<rect x="270.2" y="361.9" width="16" height="8" fill="#d2d2d6"/>
<text x="278.2" y="368.9" font-size="7.6" fill="#555" text-anchor="middle" font-weight="bold">S</text>
<rect x="270.2" y="373" width="4.6" height="8" fill="#3aac4c"/>
<rect x="275.6" y="373" width="5.2" height="8" fill="#22e044"/>
<rect x="281.6" y="373" width="4.6" height="8" fill="#3aac4c"/>
<polygon points="277,460 285,396 277,396" fill="#a4a6ac"/>
<line x1="277" y1="386.6" x2="277" y2="468.2" stroke="#e6e6e6" stroke-width="2"/>
<line x1="269" y1="396" x2="285" y2="396" stroke="#e6e6e6" stroke-width="2"/>
<line x1="269" y1="460" x2="285" y2="460" stroke="#e6e6e6" stroke-width="2"/>
<g filter="url(#sh)">
<rect x="270.5" y="387.5" width="13" height="19" fill="url(#vg)" rx="4.5" stroke="#2a2a2a" stroke-width="1.1"/>
</g>
<line x1="272.5" y1="397" x2="281.5" y2="397" stroke="#555" stroke-width="1.1"/>
<rect x="291.3" y="349.2" width="19" height="11" fill="#a04038" rx="2" opacity="0.55"/>
<rect x="292.8" y="350.6" width="16" height="8.2" fill="#f08270"/>
<text x="300.8" y="357.9" font-size="7.4" fill="#b03828" text-anchor="middle" font-weight="bold">M</text>
<rect x="292.8" y="361.9" width="16" height="8" fill="#d2d2d6"/>
<text x="300.8" y="368.9" font-size="7.6" fill="#555" text-anchor="middle" font-weight="bold">S</text>
<rect x="292.8" y="373" width="4.6" height="8" fill="#3aac4c"/>
<rect x="298.2" y="373" width="5.2" height="8" fill="#22e044"/>
<rect x="304.2" y="373" width="4.6" height="8" fill="#3aac4c"/>
<polygon points="300,460 308,396 300,396" fill="#a4a6ac"/>
<line x1="300" y1="386.6" x2="300" y2="468.2" stroke="#e6e6e6" stroke-width="2"/>
<line x1="292" y1="396" x2="308" y2="396" stroke="#e6e6e6" stroke-width="2"/>
<line x1="292" y1="460" x2="308" y2="460" stroke="#e6e6e6" stroke-width="2"/>
<g filter="url(#sh)">
<rect x="293.5" y="387.5" width="13" height="19" fill="url(#vg)" rx="4.5" stroke="#2a2a2a" stroke-width="1.1"/>
</g>
<line x1="295.5" y1="397" x2="304.5" y2="397" stroke="#555" stroke-width="1.1"/>
<text x="186.6" y="482.8" font-size="10.8" fill="#e8e8e8" text-anchor="middle" stroke="#e8e8e8" stroke-width="0.22">1</text>
<text x="209.2" y="482.8" font-size="10.8" fill="#e8e8e8" text-anchor="middle" stroke="#e8e8e8" stroke-width="0.22">2</text>
<text x="231.8" y="482.8" font-size="10.8" fill="#e8e8e8" text-anchor="middle" stroke="#e8e8e8" stroke-width="0.22">3</text>
<text x="254.4" y="482.8" font-size="10.8" fill="#e8e8e8" text-anchor="middle" stroke="#e8e8e8" stroke-width="0.22">1×2</text>
<text x="277" y="482.8" font-size="10.8" fill="#e8e8e8" text-anchor="middle" stroke="#e8e8e8" stroke-width="0.22">2×3</text>
<text x="299.6" y="482.8" font-size="10.8" fill="#e8e8e8" text-anchor="middle" stroke="#e8e8e8" stroke-width="0.22">N</text>
<polygon points="322,428 330,396 322,396" fill="#a4a6ac"/>
<polygon points="322,428 314,460 322,460" fill="#a4a6ac"/>
<line x1="322" y1="385.9" x2="322" y2="468.2" stroke="#e6e6e6" stroke-width="2"/>
<line x1="314" y1="396" x2="330" y2="396" stroke="#e6e6e6" stroke-width="2"/>
<line x1="314" y1="460" x2="330" y2="460" stroke="#e6e6e6" stroke-width="2"/>
<g filter="url(#sh)">
<rect x="315.5" y="418.5" width="13" height="19" fill="url(#vg)" rx="4.5" stroke="#2a2a2a" stroke-width="1.1"/>
</g>
<line x1="317.5" y1="428" x2="326.5" y2="428" stroke="#555" stroke-width="1.1"/>
<text x="322" y="482.8" font-size="10.5" fill="#ececec" text-anchor="middle" stroke="#ececec" stroke-width="0.22">Gain</text>
<rect x="178.6" y="485.4" width="61.2" height="7.6" fill="#b6b6ba"/>
<text x="209.2" y="492.4" font-size="8" fill="#66666c" text-anchor="middle" letter-spacing="0.5" stroke="#66666c" stroke-width="0.1">OSC</text>
<rect x="246.2" y="485.4" width="38.3" height="7.6" fill="#b6b6ba"/>
<text x="265.3" y="492.4" font-size="8" fill="#66666c" text-anchor="middle" letter-spacing="0.5" stroke="#66666c" stroke-width="0.1">RING</text>
<rect x="340.2" y="344.2" width="167.1" height="151.1" fill="url(#pan)" rx="4" stroke="#5a5d68" stroke-width="0.6"/>
<rect x="350.1" y="358.8" width="46.6" height="9.9" fill="#dcdcde"/>
<text x="373.4" y="367.8" font-size="10.8" fill="#222" text-anchor="middle" letter-spacing="0.6">C 3</text>
<text x="373.2" y="380.5" font-size="10.8" fill="#e8e8e8" text-anchor="middle" letter-spacing="0.3" stroke="#e8e8e8" stroke-width="0.22">Keytrack</text>
<polygon points="361,428 369,396 361,396" fill="#a4a6ac"/>
<polygon points="361,428 353,460 361,460" fill="#a4a6ac"/>
<line x1="361" y1="385.9" x2="361" y2="468.2" stroke="#e6e6e6" stroke-width="2"/>
<line x1="353" y1="396" x2="369" y2="396" stroke="#e6e6e6" stroke-width="2"/>
<line x1="353" y1="460" x2="369" y2="460" stroke="#e6e6e6" stroke-width="2"/>
<g filter="url(#sh)">
<rect x="354.5" y="418.5" width="13" height="19" fill="url(#vg)" rx="4.5" stroke="#2a2a2a" stroke-width="1.1"/>
</g>
<line x1="356.5" y1="428" x2="365.5" y2="428" stroke="#555" stroke-width="1.1"/>
<text x="361" y="482.8" font-size="10.5" fill="#ececec" text-anchor="middle" stroke="#ececec" stroke-width="0.22">▸F1</text>
<polygon points="384,428 392,396 384,396" fill="#a4a6ac"/>
<polygon points="384,428 376,460 384,460" fill="#a4a6ac"/>
<line x1="384" y1="385.9" x2="384" y2="468.2" stroke="#e6e6e6" stroke-width="2"/>
<line x1="376" y1="396" x2="392" y2="396" stroke="#e6e6e6" stroke-width="2"/>
<line x1="376" y1="460" x2="392" y2="460" stroke="#e6e6e6" stroke-width="2"/>
<g filter="url(#sh)">
<rect x="377.5" y="418.5" width="13" height="19" fill="url(#vg)" rx="4.5" stroke="#2a2a2a" stroke-width="1.1"/>
</g>
<line x1="379.5" y1="428" x2="388.5" y2="428" stroke="#555" stroke-width="1.1"/>
<text x="384" y="482.8" font-size="10.5" fill="#ececec" text-anchor="middle" stroke="#ececec" stroke-width="0.22">▸F2</text>
<polygon points="412,460 420,396 412,396" fill="#a4a6ac"/>
<line x1="412" y1="385.9" x2="412" y2="468.2" stroke="#e6e6e6" stroke-width="2"/>
<line x1="404" y1="396" x2="420" y2="396" stroke="#e6e6e6" stroke-width="2"/>
<line x1="404" y1="460" x2="420" y2="460" stroke="#e6e6e6" stroke-width="2"/>
<g filter="url(#sh)">
<rect x="405.5" y="424.5" width="13" height="19" fill="url(#vg)" rx="4.5" stroke="#2a2a2a" stroke-width="1.1"/>
</g>
<line x1="407.5" y1="434" x2="416.5" y2="434" stroke="#555" stroke-width="1.1"/>
<text x="412" y="482.8" font-size="10.5" fill="#ececec" text-anchor="middle" stroke="#ececec" stroke-width="0.22">HP</text>
<rect x="432.5" y="367.8" width="69.4" height="121.6" fill="#5b5e69" rx="5"/>
<text x="467.3" y="380" font-size="10.8" fill="#e8e8e8" text-anchor="middle" letter-spacing="0.3" stroke="#e8e8e8" stroke-width="0.22">Waveshaper</text>
<rect x="439.5" y="401.2" width="32.3" height="8.1" fill="#ff9a3a"/>
<text x="455.6" y="408.4" font-size="7" fill="#fff4e8" text-anchor="middle" font-weight="bold" letter-spacing="0.6">OFF</text>
<rect x="439.5" y="410.2" width="32.3" height="8.1" fill="#a86a3c"/>
<text x="455.6" y="417.4" font-size="7" fill="#fff4e8" text-anchor="middle" font-weight="bold" letter-spacing="0.6">SOFT</text>
<rect x="439.5" y="419.2" width="32.3" height="8.1" fill="#a86a3c"/>
<text x="455.6" y="426.4" font-size="7" fill="#fff4e8" text-anchor="middle" font-weight="bold" letter-spacing="0.6">HARD</text>
<rect x="439.5" y="428.2" width="32.3" height="8.1" fill="#a86a3c"/>
<text x="455.6" y="435.4" font-size="7" fill="#fff4e8" text-anchor="middle" font-weight="bold" letter-spacing="0.6">ASYM</text>
<rect x="439.5" y="437.2" width="32.3" height="8.1" fill="#a86a3c"/>
<text x="455.6" y="444.4" font-size="7" fill="#fff4e8" text-anchor="middle" font-weight="bold" letter-spacing="0.6">SINE</text>
<rect x="439.5" y="446.2" width="32.3" height="8.1" fill="#a86a3c"/>
<text x="455.6" y="453.4" font-size="7" fill="#fff4e8" text-anchor="middle" font-weight="bold" letter-spacing="0.6">DIGI</text>
<polygon points="485,428 493,396 485,396" fill="#a4a6ac"/>
<polygon points="485,428 477,460 485,460" fill="#a4a6ac"/>
<line x1="485" y1="385.9" x2="485" y2="468.2" stroke="#e6e6e6" stroke-width="2"/>
<line x1="477" y1="396" x2="493" y2="396" stroke="#e6e6e6" stroke-width="2"/>
<line x1="477" y1="460" x2="493" y2="460" stroke="#e6e6e6" stroke-width="2"/>
<g filter="url(#sh)">
<rect x="478.5" y="418.5" width="13" height="19" fill="url(#vg)" rx="4.5" stroke="#2a2a2a" stroke-width="1.1"/>
</g>
<line x1="480.5" y1="428" x2="489.5" y2="428" stroke="#555" stroke-width="1.1"/>
<rect x="479.3" y="473.5" width="12" height="10.7" fill="none" stroke="#ff9a3a" stroke-width="1.2"/>
<path d="M 481.5 482 L 483.5 482 L 487 476 L 489 476" stroke="#eee" stroke-width="1.1" fill="none"/>
<rect x="509.7" y="344.2" width="166.6" height="151.1" fill="url(#pan)" rx="4" stroke="#5a5d68" stroke-width="0.6"/>
<rect x="519.8" y="351.8" width="89.9" height="17.6" fill="#5e616c"/>
<rect x="527.4" y="351.8" width="7" height="17.6" fill="#8a6a3e"/>
<rect x="550" y="351.8" width="7" height="17.6" fill="#8a6a3e"/>
<rect x="595.6" y="351.8" width="5.9" height="17.6" fill="#8a6a3e"/>
<path d="M 519.80 369.40 Q 531.74 357.59 541.50 353.00 Q 548.38 360.20 556.80 361.20 L 586.20 361.20 Q 597.35 368.40 608.50 369.40 Z" stroke="none" stroke-width="1" fill="#d8d8d8" opacity="0.88"/>
<rect x="624.5" y="351.8" width="38.6" height="7.7" fill="#ff9a3a"/>
<text x="643.8" y="358.8" font-size="7" fill="#fff" text-anchor="middle" font-weight="bold" letter-spacing="0.5">DIGITAL</text>
<rect x="624.5" y="360.7" width="38.6" height="7.5" fill="#a8683c"/>
<text x="643.8" y="367.5" font-size="7" fill="#d0a080" text-anchor="middle" font-weight="bold" letter-spacing="0.5">ANALOG</text>
<text x="593.2" y="380.5" font-size="10.8" fill="#e8e8e8" text-anchor="middle" letter-spacing="0.4" stroke="#e8e8e8" stroke-width="0.22">Filter EG</text>
<line x1="523.4" y1="377" x2="566.6" y2="377" stroke="#e2e2e2" stroke-width="1.2"/>
<line x1="620.3" y1="377" x2="662.6" y2="377" stroke="#e2e2e2" stroke-width="1.2"/>
<polygon points="531,460 539,396 531,396" fill="#a4a6ac"/>
<line x1="531" y1="385.9" x2="531" y2="468.2" stroke="#e6e6e6" stroke-width="2"/>
<line x1="523" y1="396" x2="539" y2="396" stroke="#e6e6e6" stroke-width="2"/>
<line x1="523" y1="460" x2="539" y2="460" stroke="#e6e6e6" stroke-width="2"/>
<g filter="url(#sh)">
<rect x="524.5" y="449.5" width="13" height="19" fill="url(#vg)" rx="4.5" stroke="#2a2a2a" stroke-width="1.1"/>
</g>
<line x1="526.5" y1="459" x2="535.5" y2="459" stroke="#555" stroke-width="1.1"/>
<text x="531" y="482.8" font-size="10.5" fill="#ececec" text-anchor="middle" stroke="#ececec" stroke-width="0.22">A</text>
<polygon points="554,460 562,396 554,396" fill="#a4a6ac"/>
<line x1="554" y1="385.9" x2="554" y2="468.2" stroke="#e6e6e6" stroke-width="2"/>
<line x1="546" y1="396" x2="562" y2="396" stroke="#e6e6e6" stroke-width="2"/>
<line x1="546" y1="460" x2="562" y2="460" stroke="#e6e6e6" stroke-width="2"/>
<g filter="url(#sh)">
<rect x="547.5" y="421.5" width="13" height="19" fill="url(#vg)" rx="4.5" stroke="#2a2a2a" stroke-width="1.1"/>
</g>
<line x1="549.5" y1="431" x2="558.5" y2="431" stroke="#555" stroke-width="1.1"/>
<text x="554" y="482.8" font-size="10.5" fill="#ececec" text-anchor="middle" stroke="#ececec" stroke-width="0.22">D</text>
<polygon points="576,460 584,396 576,396" fill="#a4a6ac"/>
<line x1="576" y1="385.9" x2="576" y2="468.2" stroke="#e6e6e6" stroke-width="2"/>
<line x1="568" y1="396" x2="584" y2="396" stroke="#e6e6e6" stroke-width="2"/>
<line x1="568" y1="460" x2="584" y2="460" stroke="#e6e6e6" stroke-width="2"/>
<g filter="url(#sh)">
<rect x="569.5" y="449.5" width="13" height="19" fill="url(#vg)" rx="4.5" stroke="#2a2a2a" stroke-width="1.1"/>
</g>
<line x1="571.5" y1="459" x2="580.5" y2="459" stroke="#555" stroke-width="1.1"/>
<text x="576" y="482.8" font-size="10.5" fill="#ececec" text-anchor="middle" stroke="#ececec" stroke-width="0.22">S</text>
<polygon points="599,460 607,396 599,396" fill="#a4a6ac"/>
<line x1="599" y1="385.9" x2="599" y2="468.2" stroke="#e6e6e6" stroke-width="2"/>
<line x1="591" y1="396" x2="607" y2="396" stroke="#e6e6e6" stroke-width="2"/>
<line x1="591" y1="460" x2="607" y2="460" stroke="#e6e6e6" stroke-width="2"/>
<g filter="url(#sh)">
<rect x="592.5" y="421.5" width="13" height="19" fill="url(#vg)" rx="4.5" stroke="#2a2a2a" stroke-width="1.1"/>
</g>
<line x1="594.5" y1="431" x2="603.5" y2="431" stroke="#555" stroke-width="1.1"/>
<text x="599" y="482.8" font-size="10.5" fill="#ececec" text-anchor="middle" stroke="#ececec" stroke-width="0.22">R</text>
<polygon points="633,428 641,396 633,396" fill="#a4a6ac"/>
<polygon points="633,428 625,460 633,460" fill="#a4a6ac"/>
<line x1="633" y1="385.9" x2="633" y2="468.2" stroke="#e6e6e6" stroke-width="2"/>
<line x1="625" y1="396" x2="641" y2="396" stroke="#e6e6e6" stroke-width="2"/>
<line x1="625" y1="460" x2="641" y2="460" stroke="#e6e6e6" stroke-width="2"/>
<g filter="url(#sh)">
<rect x="626.5" y="418.5" width="13" height="19" fill="url(#vg)" rx="4.5" stroke="#2a2a2a" stroke-width="1.1"/>
</g>
<line x1="628.5" y1="428" x2="637.5" y2="428" stroke="#555" stroke-width="1.1"/>
<text x="633" y="482.8" font-size="10.5" fill="#ececec" text-anchor="middle" stroke="#ececec" stroke-width="0.22">▸F1</text>
<polygon points="655,428 663,396 655,396" fill="#a4a6ac"/>
<polygon points="655,428 647,460 655,460" fill="#a4a6ac"/>
<line x1="655" y1="385.9" x2="655" y2="468.2" stroke="#e6e6e6" stroke-width="2"/>
<line x1="647" y1="396" x2="663" y2="396" stroke="#e6e6e6" stroke-width="2"/>
<line x1="647" y1="460" x2="663" y2="460" stroke="#e6e6e6" stroke-width="2"/>
<g filter="url(#sh)">
<rect x="648.5" y="418.5" width="13" height="19" fill="url(#vg)" rx="4.5" stroke="#2a2a2a" stroke-width="1.1"/>
</g>
<line x1="650.5" y1="428" x2="659.5" y2="428" stroke="#555" stroke-width="1.1"/>
<text x="655" y="482.8" font-size="10.5" fill="#ececec" text-anchor="middle" stroke="#ececec" stroke-width="0.22">▸F2</text>
<rect x="679" y="344.2" width="167.4" height="151.1" fill="url(#pan)" rx="4" stroke="#5a5d68" stroke-width="0.6"/>
<rect x="689.4" y="351.8" width="89" height="17.6" fill="#5e616c"/>
<rect x="697.5" y="351.8" width="6.5" height="17.6" fill="#8a6a3e"/>
<rect x="720" y="351.8" width="5.7" height="17.6" fill="#8a6a3e"/>
<rect x="772" y="351.8" width="6" height="17.6" fill="#8a6a3e"/>
<path d="M 689.40 369.40 Q 701.00 357.59 710.50 353.00 Q 715.59 360.20 721.80 361.20 L 755.80 361.20 Q 767.10 368.40 778.40 369.40 Z" stroke="none" stroke-width="1" fill="#d8d8d8" opacity="0.88"/>
<rect x="794" y="351.8" width="37.8" height="7.7" fill="#ff9a3a"/>
<text x="812.9" y="358.8" font-size="7" fill="#fff" text-anchor="middle" font-weight="bold" letter-spacing="0.5">DIGITAL</text>
<rect x="794" y="360.7" width="37.8" height="7.5" fill="#a8683c"/>
<text x="812.9" y="367.5" font-size="7" fill="#d0a080" text-anchor="middle" font-weight="bold" letter-spacing="0.5">ANALOG</text>
<text x="736.3" y="380.5" font-size="10.8" fill="#e8e8e8" text-anchor="middle" letter-spacing="0.4" stroke="#e8e8e8" stroke-width="0.22">Amp EG</text>
<line x1="692.7" y1="377" x2="711.4" y2="377" stroke="#e2e2e2" stroke-width="1.2"/>
<line x1="761.3" y1="377" x2="775.2" y2="377" stroke="#e2e2e2" stroke-width="1.2"/>
<text x="812.4" y="380.5" font-size="10.8" fill="#e8e8e8" text-anchor="middle" letter-spacing="0.4" stroke="#e8e8e8" stroke-width="0.22">Amp</text>
<line x1="794.6" y1="377" x2="799.4" y2="377" stroke="#e2e2e2" stroke-width="1.2"/>
<line x1="827" y1="377" x2="831.8" y2="377" stroke="#e2e2e2" stroke-width="1.2"/>
<polygon points="700,460 708,396 700,396" fill="#a4a6ac"/>
<line x1="700" y1="385.9" x2="700" y2="468.2" stroke="#e6e6e6" stroke-width="2"/>
<line x1="692" y1="396" x2="708" y2="396" stroke="#e6e6e6" stroke-width="2"/>
<line x1="692" y1="460" x2="708" y2="460" stroke="#e6e6e6" stroke-width="2"/>
<g filter="url(#sh)">
<rect x="693.5" y="450.5" width="13" height="19" fill="url(#vg)" rx="4.5" stroke="#2a2a2a" stroke-width="1.1"/>
</g>
<line x1="695.5" y1="460" x2="704.5" y2="460" stroke="#555" stroke-width="1.1"/>
<text x="700" y="482.8" font-size="10.5" fill="#ececec" text-anchor="middle" stroke="#ececec" stroke-width="0.22">A</text>
<polygon points="723,460 731,396 723,396" fill="#a4a6ac"/>
<line x1="723" y1="385.9" x2="723" y2="468.2" stroke="#e6e6e6" stroke-width="2"/>
<line x1="715" y1="396" x2="731" y2="396" stroke="#e6e6e6" stroke-width="2"/>
<line x1="715" y1="460" x2="731" y2="460" stroke="#e6e6e6" stroke-width="2"/>
<g filter="url(#sh)">
<rect x="716.5" y="421.5" width="13" height="19" fill="url(#vg)" rx="4.5" stroke="#2a2a2a" stroke-width="1.1"/>
</g>
<line x1="718.5" y1="431" x2="727.5" y2="431" stroke="#555" stroke-width="1.1"/>
<text x="723" y="482.8" font-size="10.5" fill="#ececec" text-anchor="middle" stroke="#ececec" stroke-width="0.22">D</text>
<polygon points="745,460 753,396 745,396" fill="#a4a6ac"/>
<line x1="745" y1="385.9" x2="745" y2="468.2" stroke="#e6e6e6" stroke-width="2"/>
<line x1="737" y1="396" x2="753" y2="396" stroke="#e6e6e6" stroke-width="2"/>
<line x1="737" y1="460" x2="753" y2="460" stroke="#e6e6e6" stroke-width="2"/>
<g filter="url(#sh)">
<rect x="738.5" y="387.5" width="13" height="19" fill="url(#vg)" rx="4.5" stroke="#2a2a2a" stroke-width="1.1"/>
</g>
<line x1="740.5" y1="397" x2="749.5" y2="397" stroke="#555" stroke-width="1.1"/>
<text x="745" y="482.8" font-size="10.5" fill="#ececec" text-anchor="middle" stroke="#ececec" stroke-width="0.22">S</text>
<polygon points="768,460 776,396 768,396" fill="#a4a6ac"/>
<line x1="768" y1="385.9" x2="768" y2="468.2" stroke="#e6e6e6" stroke-width="2"/>
<line x1="760" y1="396" x2="776" y2="396" stroke="#e6e6e6" stroke-width="2"/>
<line x1="760" y1="460" x2="776" y2="460" stroke="#e6e6e6" stroke-width="2"/>
<g filter="url(#sh)">
<rect x="761.5" y="435.5" width="13" height="19" fill="url(#vg)" rx="4.5" stroke="#2a2a2a" stroke-width="1.1"/>
</g>
<line x1="763.5" y1="445" x2="772.5" y2="445" stroke="#555" stroke-width="1.1"/>
<text x="768" y="482.8" font-size="10.5" fill="#ececec" text-anchor="middle" stroke="#ececec" stroke-width="0.22">R</text>
<polygon points="802,428 810,396 802,396" fill="#a4a6ac"/>
<polygon points="802,428 794,460 802,460" fill="#a4a6ac"/>
<line x1="802" y1="385.9" x2="802" y2="468.2" stroke="#e6e6e6" stroke-width="2"/>
<line x1="794" y1="396" x2="810" y2="396" stroke="#e6e6e6" stroke-width="2"/>
<line x1="794" y1="460" x2="810" y2="460" stroke="#e6e6e6" stroke-width="2"/>
<g filter="url(#sh)">
<rect x="795.5" y="418.5" width="13" height="19" fill="url(#vg)" rx="4.5" stroke="#2a2a2a" stroke-width="1.1"/>
</g>
<line x1="797.5" y1="428" x2="806.5" y2="428" stroke="#555" stroke-width="1.1"/>
<text x="802" y="482.8" font-size="10.5" fill="#ececec" text-anchor="middle" stroke="#ececec" stroke-width="0.22">Gain</text>
<polygon points="825,460 833,396 825,396" fill="#a4a6ac"/>
<line x1="825" y1="385.9" x2="825" y2="468.2" stroke="#e6e6e6" stroke-width="2"/>
<line x1="817" y1="396" x2="833" y2="396" stroke="#e6e6e6" stroke-width="2"/>
<line x1="817" y1="460" x2="833" y2="460" stroke="#e6e6e6" stroke-width="2"/>
<g filter="url(#sh)">
<rect x="818.5" y="387.5" width="13" height="19" fill="url(#vg)" rx="4.5" stroke="#2a2a2a" stroke-width="1.1"/>
</g>
<line x1="820.5" y1="397" x2="829.5" y2="397" stroke="#555" stroke-width="1.1"/>
<text x="825" y="482.8" font-size="10.5" fill="#ececec" text-anchor="middle" stroke="#ececec" stroke-width="0.22">Vel</text>
<rect x="2" y="496.3" width="844.5" height="1.7" fill="#0a0a0a"/>
<rect x="2" y="498" width="844.5" height="56.2" fill="#0a4cb4"/>
<rect x="3.1" y="500.25" width="70.3" height="14.05" fill="#0b336d" stroke="#1a63d0" stroke-width="1.2"/>
<text x="38.25" y="511.7" font-size="11" fill="#2766cc" text-anchor="middle" stroke="#2766cc" stroke-width="0.15">Velocity</text>
<rect x="76.6" y="500.25" width="69.5" height="14.05" fill="#0b336d" stroke="#1a63d0" stroke-width="1.2"/>
<text x="111.35" y="511.7" font-size="11" fill="#2766cc" text-anchor="middle" stroke="#2766cc" stroke-width="0.15">Keytrack</text>
<rect x="148.4" y="500.25" width="69.6" height="14.05" fill="#0b336d" stroke="#1a63d0" stroke-width="1.2"/>
<text x="183.2" y="511.7" font-size="11" fill="#2766cc" text-anchor="middle" stroke="#2766cc" stroke-width="0.15">Poly AT</text>
<rect x="220.5" y="500.25" width="70" height="14.05" fill="#0b336d" stroke="#1a63d0" stroke-width="1.2"/>
<text x="255.5" y="511.7" font-size="11" fill="#2766cc" text-anchor="middle" stroke="#2766cc" stroke-width="0.15">Chan. AT</text>
<rect x="292.5" y="500.25" width="70" height="14.05" fill="#0b336d" stroke="#1a63d0" stroke-width="1.2"/>
<text x="327.5" y="511.7" font-size="11" fill="#2766cc" text-anchor="middle" stroke="#2766cc" stroke-width="0.15">Pitchbend</text>
<rect x="364.5" y="500.25" width="70" height="14.05" fill="#0b336d" stroke="#1a63d0" stroke-width="1.2"/>
<text x="399.5" y="511.7" font-size="11" fill="#2766cc" text-anchor="middle" stroke="#2766cc" stroke-width="0.15">Modwheel</text>
<rect x="437.5" y="500.25" width="68.5" height="14.05" fill="#0b336d" stroke="#1a63d0" stroke-width="1.2"/>
<text x="471.75" y="511.7" font-size="11" fill="#2766cc" text-anchor="middle" stroke="#2766cc" stroke-width="0.15">Amp EG</text>
<rect x="2.6" y="517.25" width="71.3" height="15.55" fill="#1a8cff"/>
<text x="38.25" y="529.7" font-size="11" fill="#0c2450" text-anchor="middle" stroke="#0c2450" stroke-width="0.15">LFO 1</text>
<path d="M 65.9 519.525 L 69.1 519.525 L 69.1 524.525 L 71.5 524.525 L 67.5 529.525 L 63.5 524.525 L 65.9 524.525 Z" stroke="#ff9a1a" stroke-width="1.1" fill="#0c2c60"/>
<rect x="76.6" y="517.75" width="69.5" height="14.55" fill="#0b336d" stroke="#1a63d0" stroke-width="1.2"/>
<text x="111.35" y="529.7" font-size="11" fill="#2766cc" text-anchor="middle" stroke="#2766cc" stroke-width="0.15">LFO 2</text>
<line x1="140.2" y1="520.52" x2="140.2" y2="527.02" stroke="#3d8cf0" stroke-width="1.3"/>
<polygon points="137,525.52 143.4,525.52 140.2,529.52" fill="#3d8cf0"/>
<rect x="148.4" y="517.75" width="69.6" height="14.55" fill="#0b336d" stroke="#1a63d0" stroke-width="1.2"/>
<text x="183.2" y="529.7" font-size="11" fill="#2766cc" text-anchor="middle" stroke="#2766cc" stroke-width="0.15">LFO 3</text>
<line x1="212.1" y1="520.52" x2="212.1" y2="527.02" stroke="#3d8cf0" stroke-width="1.3"/>
<polygon points="208.9,525.52 215.3,525.52 212.1,529.52" fill="#3d8cf0"/>
<rect x="220.5" y="517.75" width="70" height="14.55" fill="#0b336d" stroke="#1a63d0" stroke-width="1.2"/>
<text x="255.5" y="529.7" font-size="11" fill="#2766cc" text-anchor="middle" stroke="#2766cc" stroke-width="0.15">LFO 4</text>
<line x1="284.6" y1="520.52" x2="284.6" y2="527.02" stroke="#3d8cf0" stroke-width="1.3"/>
<polygon points="281.4,525.52 287.8,525.52 284.6,529.52" fill="#3d8cf0"/>
<rect x="292.5" y="517.75" width="70" height="14.55" fill="#0b336d" stroke="#1a63d0" stroke-width="1.2"/>
<text x="327.5" y="529.7" font-size="11" fill="#2766cc" text-anchor="middle" stroke="#2766cc" stroke-width="0.15">LFO 5</text>
<line x1="356.6" y1="520.52" x2="356.6" y2="527.02" stroke="#3d8cf0" stroke-width="1.3"/>
<polygon points="353.4,525.52 359.8,525.52 356.6,529.52" fill="#3d8cf0"/>
<rect x="364.5" y="517.75" width="70" height="14.55" fill="#0b336d" stroke="#1a63d0" stroke-width="1.2"/>
<text x="399.5" y="529.7" font-size="11" fill="#2766cc" text-anchor="middle" stroke="#2766cc" stroke-width="0.15">LFO 6</text>
<line x1="428.6" y1="520.52" x2="428.6" y2="527.02" stroke="#3d8cf0" stroke-width="1.3"/>
<polygon points="425.4,525.52 431.8,525.52 428.6,529.52" fill="#3d8cf0"/>
<rect x="437.5" y="517.75" width="68.5" height="14.55" fill="#0b336d" stroke="#1a63d0" stroke-width="1.2"/>
<text x="471.75" y="529.7" font-size="11" fill="#2766cc" text-anchor="middle" stroke="#2766cc" stroke-width="0.15">Filter EG</text>
<rect x="3.1" y="535.9" width="70.3" height="14.35" fill="#0b336d" stroke="#1a63d0" stroke-width="1.2"/>
<text x="38.25" y="547.65" font-size="11" fill="#2766cc" text-anchor="middle" stroke="#2766cc" stroke-width="0.15">SLFO 1</text>
<line x1="67.5" y1="538.58" x2="67.5" y2="545.08" stroke="#3d8cf0" stroke-width="1.3"/>
<polygon points="64.3,543.58 70.7,543.58 67.5,547.58" fill="#3d8cf0"/>
<rect x="76.6" y="535.9" width="69.5" height="14.35" fill="#0b336d" stroke="#1a63d0" stroke-width="1.2"/>
<text x="111.35" y="547.65" font-size="11" fill="#2766cc" text-anchor="middle" stroke="#2766cc" stroke-width="0.15">SLFO 2</text>
<line x1="140.2" y1="538.58" x2="140.2" y2="545.08" stroke="#3d8cf0" stroke-width="1.3"/>
<polygon points="137,543.58 143.4,543.58 140.2,547.58" fill="#3d8cf0"/>
<rect x="148.4" y="535.9" width="69.6" height="14.35" fill="#0b336d" stroke="#1a63d0" stroke-width="1.2"/>
<text x="183.2" y="547.65" font-size="11" fill="#2766cc" text-anchor="middle" stroke="#2766cc" stroke-width="0.15">SLFO 3</text>
<line x1="212.1" y1="538.58" x2="212.1" y2="545.08" stroke="#3d8cf0" stroke-width="1.3"/>
<polygon points="208.9,543.58 215.3,543.58 212.1,547.58" fill="#3d8cf0"/>
<rect x="220.5" y="535.9" width="70" height="14.35" fill="#0b336d" stroke="#1a63d0" stroke-width="1.2"/>
<text x="255.5" y="547.65" font-size="11" fill="#2766cc" text-anchor="middle" stroke="#2766cc" stroke-width="0.15">SLFO 4</text>
<line x1="284.6" y1="538.58" x2="284.6" y2="545.08" stroke="#3d8cf0" stroke-width="1.3"/>
<polygon points="281.4,543.58 287.8,543.58 284.6,547.58" fill="#3d8cf0"/>
<rect x="292.5" y="535.9" width="70" height="14.35" fill="#0b336d" stroke="#1a63d0" stroke-width="1.2"/>
<text x="327.5" y="547.65" font-size="11" fill="#2766cc" text-anchor="middle" stroke="#2766cc" stroke-width="0.15">SLFO 5</text>
<line x1="356.6" y1="538.58" x2="356.6" y2="545.08" stroke="#3d8cf0" stroke-width="1.3"/>
<polygon points="353.4,543.58 359.8,543.58 356.6,547.58" fill="#3d8cf0"/>
<rect x="364.5" y="535.9" width="70" height="14.35" fill="#0b336d" stroke="#1a63d0" stroke-width="1.2"/>
<text x="399.5" y="547.65" font-size="11" fill="#2766cc" text-anchor="middle" stroke="#2766cc" stroke-width="0.15">SLFO 6</text>
<line x1="428.6" y1="538.58" x2="428.6" y2="545.08" stroke="#3d8cf0" stroke-width="1.3"/>
<polygon points="425.4,543.58 431.8,543.58 428.6,547.58" fill="#3d8cf0"/>
<rect x="437.5" y="535.9" width="68.5" height="14.35" fill="#0b336d" stroke="#1a63d0" stroke-width="1.2"/>
<text x="471.75" y="547.65" font-size="11" fill="#2766cc" text-anchor="middle" stroke="#2766cc" stroke-width="0.15">Timbre</text>
<rect x="510.3" y="499.3" width="81.2" height="23.6" fill="#0b336d" stroke="#1a63d0" stroke-width="1.2"/>
<line x1="548.4" y1="507.8" x2="553.4" y2="507.8" stroke="#2766cc" stroke-width="1"/>
<rect x="511.8" y="514.8" width="78.2" height="6.6" fill="#1766d2"/>
<rect x="511.8" y="514.8" width="1.5" height="6.6" fill="#2a80f0"/>
<rect x="510.3" y="526.7" width="81.2" height="24.3" fill="#0b336d" stroke="#1a63d0" stroke-width="1.2"/>
<line x1="548.4" y1="535.2" x2="553.4" y2="535.2" stroke="#2766cc" stroke-width="1"/>
<rect x="511.8" y="542.9" width="78.2" height="6.6" fill="#1766d2"/>
<rect x="511.8" y="542.9" width="1.5" height="6.6" fill="#2a80f0"/>
<rect x="595.5" y="499.3" width="79.8" height="23.6" fill="#0b336d" stroke="#1a63d0" stroke-width="1.2"/>
<line x1="632.9" y1="507.8" x2="637.9" y2="507.8" stroke="#2766cc" stroke-width="1"/>
<rect x="597" y="514.8" width="76.8" height="6.6" fill="#1766d2"/>
<rect x="597" y="514.8" width="1.5" height="6.6" fill="#2a80f0"/>
<rect x="595.5" y="526.7" width="79.8" height="24.3" fill="#0b336d" stroke="#1a63d0" stroke-width="1.2"/>
<line x1="632.9" y1="535.2" x2="637.9" y2="535.2" stroke="#2766cc" stroke-width="1"/>
<rect x="597" y="542.9" width="76.8" height="6.6" fill="#1766d2"/>
<rect x="597" y="542.9" width="1.5" height="6.6" fill="#2a80f0"/>
<rect x="679.8" y="499.3" width="80.7" height="23.6" fill="#0b336d" stroke="#1a63d0" stroke-width="1.2"/>
<line x1="717.65" y1="507.8" x2="722.65" y2="507.8" stroke="#2766cc" stroke-width="1"/>
<rect x="681.3" y="514.8" width="77.7" height="6.6" fill="#1766d2"/>
<rect x="681.3" y="514.8" width="1.5" height="6.6" fill="#2a80f0"/>
<rect x="679.8" y="526.7" width="80.7" height="24.3" fill="#0b336d" stroke="#1a63d0" stroke-width="1.2"/>
<line x1="717.65" y1="535.2" x2="722.65" y2="535.2" stroke="#2766cc" stroke-width="1"/>
<rect x="681.3" y="542.9" width="77.7" height="6.6" fill="#1766d2"/>
<rect x="681.3" y="542.9" width="1.5" height="6.6" fill="#2a80f0"/>
<rect x="764.2" y="499.3" width="81.3" height="23.6" fill="#0b336d" stroke="#1a63d0" stroke-width="1.2"/>
<line x1="802.35" y1="507.8" x2="807.35" y2="507.8" stroke="#2766cc" stroke-width="1"/>
<rect x="765.7" y="514.8" width="78.3" height="6.6" fill="#1766d2"/>
<rect x="765.7" y="514.8" width="1.5" height="6.6" fill="#2a80f0"/>
<rect x="764.2" y="526.7" width="81.3" height="24.3" fill="#0b336d" stroke="#1a63d0" stroke-width="1.2"/>
<line x1="802.35" y1="535.2" x2="807.35" y2="535.2" stroke="#2766cc" stroke-width="1"/>
<rect x="765.7" y="542.9" width="78.3" height="6.6" fill="#1766d2"/>
<rect x="765.7" y="542.9" width="1.5" height="6.6" fill="#2a80f0"/>
<rect x="848.5" y="497" width="7.5" height="56.5" fill="#3a8cff"/>
<text transform="translate(850.3,525.8) rotate(90)" font-size="7" font-weight="bold" fill="#111" text-anchor="middle" letter-spacing="0.5">ROUTE</text>
<rect x="2" y="555.7" width="844.5" height="104.1" fill="#ff9000"/>
<rect x="848.5" y="556" width="7.5" height="103.8" fill="#ff9000"/>
<text transform="translate(850.3,607.2) rotate(90)" font-size="7" font-weight="bold" fill="#111" text-anchor="middle" letter-spacing="0.7">MODULATION</text>
<polygon points="22.5,572 148.5,564 148.5,572" fill="#9a9490"/>
<line x1="16.2" y1="572" x2="154.8" y2="572" stroke="#111" stroke-width="2"/>
<line x1="22.5" y1="564" x2="22.5" y2="580" stroke="#111" stroke-width="1"/>
<line x1="148.5" y1="564" x2="148.5" y2="580" stroke="#111" stroke-width="1"/>
<text x="145.2" y="583" font-size="10.8" fill="#111" text-anchor="end" letter-spacing="0.05" stroke="#111" stroke-width="0.22">Rate</text>
<g filter="url(#sh)">
<rect x="68.5" y="564.5" width="20" height="14" fill="url(#hg)" rx="4.5" stroke="#2a2a2a" stroke-width="1.1"/>
</g>
<line x1="78.5" y1="566" x2="78.5" y2="577" stroke="#383838" stroke-width="1.1"/>
<polygon points="16.2,595 148.5,587 148.5,595" fill="#9a9490"/>
<line x1="16.2" y1="595" x2="154.8" y2="595" stroke="#111" stroke-width="2"/>
<line x1="148.5" y1="587" x2="148.5" y2="603" stroke="#111" stroke-width="1"/>
<text x="145.2" y="606.9" font-size="10.8" fill="#111" text-anchor="end" letter-spacing="0.05" stroke="#111" stroke-width="0.22">Phase / Shuffle</text>
<g filter="url(#sh)">
<rect x="12.5" y="588.5" width="20" height="14" fill="url(#hg)" rx="4.5" stroke="#2a2a2a" stroke-width="1.1"/>
</g>
<line x1="22.5" y1="590" x2="22.5" y2="601" stroke="#383838" stroke-width="1.1"/>
<polygon points="22.5,619 148.5,611 148.5,619" fill="#9a9490"/>
<line x1="16.2" y1="619" x2="154.8" y2="619" stroke="#111" stroke-width="2"/>
<line x1="22.5" y1="611" x2="22.5" y2="627" stroke="#111" stroke-width="1"/>
<line x1="148.5" y1="611" x2="148.5" y2="627" stroke="#111" stroke-width="1"/>
<text x="145.2" y="630.4" font-size="10.8" fill="#111" text-anchor="end" letter-spacing="0.05" stroke="#111" stroke-width="0.22">Magnitude</text>
<g filter="url(#sh)">
<rect x="139.5" y="612.5" width="20" height="14" fill="url(#hg)" rx="4.5" stroke="#2a2a2a" stroke-width="1.1"/>
</g>
<line x1="149.5" y1="614" x2="149.5" y2="625" stroke="#383838" stroke-width="1.1"/>
<polygon points="22.5,643 22.5,651 85.5,643" fill="#9a9490"/>
<polygon points="85.5,643 148.5,635 148.5,643" fill="#9a9490"/>
<line x1="16.2" y1="643" x2="154.8" y2="643" stroke="#111" stroke-width="2"/>
<line x1="22.5" y1="635" x2="22.5" y2="651" stroke="#111" stroke-width="1"/>
<line x1="148.5" y1="635" x2="148.5" y2="651" stroke="#111" stroke-width="1"/>
<text x="145.2" y="654.1" font-size="10.8" fill="#111" text-anchor="end" letter-spacing="0.05" stroke="#111" stroke-width="0.22">Deform</text>
<g filter="url(#sh)">
<rect x="76.5" y="636.5" width="20" height="14" fill="url(#hg)" rx="4.5" stroke="#2a2a2a" stroke-width="1.1"/>
</g>
<line x1="86.5" y1="638" x2="86.5" y2="649" stroke="#383838" stroke-width="1.1"/>
<rect x="183.8" y="566.3" width="56" height="42" fill="#e6e6e8" rx="4" stroke="#9a9aa6" stroke-width="1.2"/>
<rect x="186.2" y="582.4" width="51.3" height="10.4" fill="#ff9a14"/>
<line x1="186.2" y1="580.8" x2="237.5" y2="580.8" stroke="#b0b2c8" stroke-width="1"/>
<line x1="186.2" y1="594.2" x2="237.5" y2="594.2" stroke="#b0b2c8" stroke-width="1"/>
<text x="211.8" y="577.5" font-size="10" fill="#111" text-anchor="middle" stroke="#111" stroke-width="0.22">Freerun</text>
<text x="211.8" y="591" font-size="10" fill="#111" text-anchor="middle" stroke="#111" stroke-width="0.22">Keytrigger</text>
<text x="211.8" y="604.2" font-size="10" fill="#111" text-anchor="middle" stroke="#111" stroke-width="0.22">Random</text>
<rect x="183.8" y="616.3" width="56" height="15" fill="#e6e6e8" rx="4" stroke="#9a9aa6" stroke-width="1.2"/>
<text x="211.8" y="627.3" font-size="10" fill="#111" text-anchor="middle" stroke="#111" stroke-width="0.22">Bipolar</text>
<rect x="270.3" y="562.8" width="55.5" height="92" fill="#e6e6e8" rx="4" stroke="#9a9aa6" stroke-width="1.2"/>
<rect x="272" y="564" width="52" height="9.3" fill="#ff9a1a"/>
<text x="298" y="571.8" font-size="9.4" fill="#1a1a1a" text-anchor="middle" letter-spacing="0.2" stroke="#1a1a1a" stroke-width="0.22">Sine</text>
<line x1="272.5" y1="574.2" x2="323.5" y2="574.2" stroke="#a8aac4" stroke-width="1"/>
<text x="298" y="583.1" font-size="9.4" fill="#1a1a1a" text-anchor="middle" letter-spacing="0.2" stroke="#1a1a1a" stroke-width="0.22">Triangle</text>
<line x1="272.5" y1="585.5" x2="323.5" y2="585.5" stroke="#a8aac4" stroke-width="1"/>
<text x="298" y="594.4" font-size="9.4" fill="#1a1a1a" text-anchor="middle" letter-spacing="0.2" stroke="#1a1a1a" stroke-width="0.22">Square</text>
<line x1="272.5" y1="596.8" x2="323.5" y2="596.8" stroke="#a8aac4" stroke-width="1"/>
<text x="298" y="605.7" font-size="9.4" fill="#1a1a1a" text-anchor="middle" letter-spacing="0.2" stroke="#1a1a1a" stroke-width="0.22">Ramp</text>
<line x1="272.5" y1="608.1" x2="323.5" y2="608.1" stroke="#a8aac4" stroke-width="1"/>
<text x="298" y="617" font-size="9.4" fill="#1a1a1a" text-anchor="middle" letter-spacing="0.2" stroke="#1a1a1a" stroke-width="0.22">Noise</text>
<line x1="272.5" y1="619.4" x2="323.5" y2="619.4" stroke="#a8aac4" stroke-width="1"/>
<text x="298" y="628.3" font-size="9.4" fill="#1a1a1a" text-anchor="middle" letter-spacing="0.2" stroke="#1a1a1a" stroke-width="0.22">S&amp;H</text>
<line x1="272.5" y1="630.7" x2="323.5" y2="630.7" stroke="#a8aac4" stroke-width="1"/>
<text x="298" y="639.6" font-size="9.4" fill="#1a1a1a" text-anchor="middle" letter-spacing="0.2" stroke="#1a1a1a" stroke-width="0.22">Envelope</text>
<line x1="272.5" y1="642" x2="323.5" y2="642" stroke="#a8aac4" stroke-width="1"/>
<text x="298" y="650.9" font-size="9.4" fill="#1a1a1a" text-anchor="middle" letter-spacing="0.2" stroke="#1a1a1a" stroke-width="0.22">Stepseq</text>
<line x1="347.5" y1="568.5" x2="670.5" y2="568.5" stroke="#d07000" stroke-width="1"/>
<line x1="347.5" y1="607" x2="670.5" y2="607" stroke="#c06800" stroke-width="1"/>
<line x1="347.5" y1="645.5" x2="670.5" y2="645.5" stroke="#d07000" stroke-width="1"/>
<path d="M 347.5 606.68 L 348.5 605.45 L 349.5 604.22 L 350.5 602.99 L 351.5 601.77 L 352.5 600.55 L 353.5 599.34 L 354.5 598.13 L 355.5 596.94 L 356.5 595.76 L 357.5 594.59 L 358.5 593.43 L 359.5 592.29 L 360.5 591.16 L 361.5 590.05 L 362.5 588.96 L 363.5 587.88 L 364.5 586.83 L 365.5 585.8 L 366.5 584.79 L 367.5 583.8 L 368.5 582.84 L 369.5 581.9 L 370.5 580.99 L 371.5 580.11 L 372.5 579.25 L 373.5 578.43 L 374.5 577.63 L 375.5 576.87 L 376.5 576.13 L 377.5 575.43 L 378.5 574.77 L 379.5 574.13 L 380.5 573.53 L 381.5 572.97 L 382.5 572.44 L 383.5 571.95 L 384.5 571.49 L 385.5 571.07 L 386.5 570.69 L 387.5 570.35 L 388.5 570.04 L 389.5 569.77 L 390.5 569.55 L 391.5 569.36 L 392.5 569.21 L 393.5 569.1 L 394.5 569.03 L 395.5 569 L 396.5 569.01 L 397.5 569.06 L 398.5 569.15 L 399.5 569.28 L 400.5 569.45 L 401.5 569.66 L 402.5 569.9 L 403.5 570.19 L 404.5 570.51 L 405.5 570.87 L 406.5 571.27 L 407.5 571.71 L 408.5 572.19 L 409.5 572.7 L 410.5 573.24 L 411.5 573.83 L 412.5 574.44 L 413.5 575.1 L 414.5 575.78 L 415.5 576.5 L 416.5 577.25 L 417.5 578.03 L 418.5 578.84 L 419.5 579.68 L 420.5 580.55 L 421.5 581.44 L 422.5 582.37 L 423.5 583.32 L 424.5 584.29 L 425.5 585.29 L 426.5 586.31 L 427.5 587.35 L 428.5 588.42 L 429.5 589.5 L 430.5 590.6 L 431.5 591.72 L 432.5 592.86 L 433.5 594.01 L 434.5 595.17 L 435.5 596.35 L 436.5 597.54 L 437.5 598.73 L 438.5 599.94 L 439.5 601.16 L 440.5 602.38 L 441.5 603.6 L 442.5 604.83 L 443.5 606.07 L 444.5 607.3 L 445.5 608.53 L 446.5 609.77 L 447.5 611 L 448.5 612.22 L 449.5 613.44 L 450.5 614.66 L 451.5 615.87 L 452.5 617.06 L 453.5 618.25 L 454.5 619.43 L 455.5 620.59 L 456.5 621.74 L 457.5 622.88 L 458.5 624 L 459.5 625.1 L 460.5 626.18 L 461.5 627.25 L 462.5 628.29 L 463.5 629.31 L 464.5 630.31 L 465.5 631.28 L 466.5 632.23 L 467.5 633.16 L 468.5 634.05 L 469.5 634.92 L 470.5 635.76 L 471.5 636.57 L 472.5 637.35 L 473.5 638.1 L 474.5 638.82 L 475.5 639.5 L 476.5 640.16 L 477.5 640.77 L 478.5 641.36 L 479.5 641.9 L 480.5 642.41 L 481.5 642.89 L 482.5 643.33 L 483.5 643.73 L 484.5 644.09 L 485.5 644.41 L 486.5 644.7 L 487.5 644.94 L 488.5 645.15 L 489.5 645.32 L 490.5 645.45 L 491.5 645.54 L 492.5 645.59 L 493.5 645.6 L 494.5 645.57 L 495.5 645.5 L 496.5 645.39 L 497.5 645.24 L 498.5 645.05 L 499.5 644.83 L 500.5 644.56 L 501.5 644.25 L 502.5 643.91 L 503.5 643.53 L 504.5 643.11 L 505.5 642.65 L 506.5 642.16 L 507.5 641.63 L 508.5 641.07 L 509.5 640.47 L 510.5 639.83 L 511.5 639.17 L 512.5 638.47 L 513.5 637.73 L 514.5 636.97 L 515.5 636.17 L 516.5 635.35 L 517.5 634.49 L 518.5 633.61 L 519.5 632.7 L 520.5 631.76 L 521.5 630.8 L 522.5 629.81 L 523.5 628.8 L 524.5 627.77 L 525.5 626.72 L 526.5 625.64 L 527.5 624.55 L 528.5 623.44 L 529.5 622.31 L 530.5 621.17 L 531.5 620.01 L 532.5 618.84 L 533.5 617.66 L 534.5 616.47 L 535.5 615.26 L 536.5 614.05 L 537.5 612.83 L 538.5 611.61 L 539.5 610.38 L 540.5 609.15 L 541.5 607.92 L 542.5 606.68 L 543.5 605.45 L 544.5 604.22 L 545.5 602.99 L 546.5 601.77 L 547.5 600.55 L 548.5 599.34 L 549.5 598.13 L 550.5 596.94 L 551.5 595.76 L 552.5 594.59 L 553.5 593.43 L 554.5 592.29 L 555.5 591.16 L 556.5 590.05 L 557.5 588.96 L 558.5 587.88 L 559.5 586.83 L 560.5 585.8 L 561.5 584.79 L 562.5 583.8 L 563.5 582.84 L 564.5 581.9 L 565.5 580.99 L 566.5 580.11 L 567.5 579.25 L 568.5 578.43 L 569.5 577.63 L 570.5 576.87 L 571.5 576.13 L 572.5 575.43 L 573.5 574.77 L 574.5 574.13 L 575.5 573.53 L 576.5 572.97 L 577.5 572.44 L 578.5 571.95 L 579.5 571.49 L 580.5 571.07 L 581.5 570.69 L 582.5 570.35 L 583.5 570.04 L 584.5 569.77 L 585.5 569.55 L 586.5 569.36 L 587.5 569.21 L 588.5 569.1 L 589.5 569.03 L 590.5 569 L 591.5 569.01 L 592.5 569.06 L 593.5 569.15 L 594.5 569.28 L 595.5 569.45 L 596.5 569.66 L 597.5 569.9 L 598.5 570.19 L 599.5 570.51 L 600.5 570.87 L 601.5 571.27 L 602.5 571.71 L 603.5 572.19 L 604.5 572.7 L 605.5 573.24 L 606.5 573.83 L 607.5 574.44 L 608.5 575.1 L 609.5 575.78 L 610.5 576.5 L 611.5 577.25 L 612.5 578.03 L 613.5 578.84 L 614.5 579.68 L 615.5 580.55 L 616.5 581.44 L 617.5 582.37 L 618.5 583.32 L 619.5 584.29 L 620.5 585.29 L 621.5 586.31 L 622.5 587.35 L 623.5 588.42 L 624.5 589.5 L 625.5 590.6 L 626.5 591.72 L 627.5 592.86 L 628.5 594.01 L 629.5 595.17 L 630.5 596.35 L 631.5 597.54 L 632.5 598.73 L 633.5 599.94 L 634.5 601.16 L 635.5 602.38 L 636.5 603.6 L 637.5 604.83 L 638.5 606.07 L 639.5 607.3 L 640.5 608.53 L 641.5 609.77 L 642.5 611 L 643.5 612.22 L 644.5 613.44 L 645.5 614.66 L 646.5 615.87 L 647.5 617.06 L 648.5 618.25 L 649.5 619.43 L 650.5 620.59 L 651.5 621.74 L 652.5 622.88 L 653.5 624 L 654.5 625.1 L 655.5 626.18 L 656.5 627.25 L 657.5 628.29 L 658.5 629.31 L 659.5 630.31 L 660.5 631.28 L 661.5 632.23 L 662.5 633.16 L 663.5 634.05 L 664.5 634.92 L 665.5 635.76 L 666.5 636.57 L 667.5 637.35 L 668.5 638.1 L 669.5 638.82 L 670.5 639.5" stroke="#111" stroke-width="2" fill="none"/>
<text x="762.5" y="570.2" font-size="10.4" fill="#111" text-anchor="middle" stroke="#111" stroke-width="0.22">LFO EG</text>
<line x1="698.7" y1="566.3" x2="741.9" y2="566.3" stroke="#111" stroke-width="1.2"/>
<line x1="783" y1="566.3" x2="827" y2="566.3" stroke="#111" stroke-width="1.2"/>
<polygon points="706,629 714,584 706,584" fill="#9a9490"/>
<line x1="706" y1="573.7" x2="706" y2="637" stroke="#111" stroke-width="2"/>
<line x1="698" y1="584" x2="714" y2="584" stroke="#111" stroke-width="2"/>
<line x1="698" y1="629" x2="714" y2="629" stroke="#111" stroke-width="2"/>
<g filter="url(#sh)">
<rect x="699.5" y="618.5" width="13" height="19" fill="url(#vg)" rx="4.5" stroke="#2a2a2a" stroke-width="1.1"/>
</g>
<line x1="701.5" y1="628" x2="710.5" y2="628" stroke="#555" stroke-width="1.1"/>
<text x="706" y="654.6" font-size="10.5" fill="#111" text-anchor="middle" stroke="#111" stroke-width="0.22">D</text>
<polygon points="728,629 736,584 728,584" fill="#9a9490"/>
<line x1="728" y1="573.7" x2="728" y2="637" stroke="#111" stroke-width="2"/>
<line x1="720" y1="584" x2="736" y2="584" stroke="#111" stroke-width="2"/>
<line x1="720" y1="629" x2="736" y2="629" stroke="#111" stroke-width="2"/>
<g filter="url(#sh)">
<rect x="721.5" y="618.5" width="13" height="19" fill="url(#vg)" rx="4.5" stroke="#2a2a2a" stroke-width="1.1"/>
</g>
<line x1="723.5" y1="628" x2="732.5" y2="628" stroke="#555" stroke-width="1.1"/>
<text x="728" y="654.6" font-size="10.5" fill="#111" text-anchor="middle" stroke="#111" stroke-width="0.22">A</text>
<polygon points="751,629 759,584 751,584" fill="#9a9490"/>
<line x1="751" y1="573.7" x2="751" y2="637" stroke="#111" stroke-width="2"/>
<line x1="743" y1="584" x2="759" y2="584" stroke="#111" stroke-width="2"/>
<line x1="743" y1="629" x2="759" y2="629" stroke="#111" stroke-width="2"/>
<g filter="url(#sh)">
<rect x="744.5" y="618.5" width="13" height="19" fill="url(#vg)" rx="4.5" stroke="#2a2a2a" stroke-width="1.1"/>
</g>
<line x1="746.5" y1="628" x2="755.5" y2="628" stroke="#555" stroke-width="1.1"/>
<text x="751" y="654.6" font-size="10.5" fill="#111" text-anchor="middle" stroke="#111" stroke-width="0.22">H</text>
<polygon points="774,629 782,584 774,584" fill="#9a9490"/>
<line x1="774" y1="573.7" x2="774" y2="637" stroke="#111" stroke-width="2"/>
<line x1="766" y1="584" x2="782" y2="584" stroke="#111" stroke-width="2"/>
<line x1="766" y1="629" x2="782" y2="629" stroke="#111" stroke-width="2"/>
<g filter="url(#sh)">
<rect x="767.5" y="592.5" width="13" height="19" fill="url(#vg)" rx="4.5" stroke="#2a2a2a" stroke-width="1.1"/>
</g>
<line x1="769.5" y1="602" x2="778.5" y2="602" stroke="#555" stroke-width="1.1"/>
<text x="774" y="654.6" font-size="10.5" fill="#111" text-anchor="middle" stroke="#111" stroke-width="0.22">D</text>
<polygon points="796,629 804,584 796,584" fill="#9a9490"/>
<line x1="796" y1="573.7" x2="796" y2="637" stroke="#111" stroke-width="2"/>
<line x1="788" y1="584" x2="804" y2="584" stroke="#111" stroke-width="2"/>
<line x1="788" y1="629" x2="804" y2="629" stroke="#111" stroke-width="2"/>
<g filter="url(#sh)">
<rect x="789.5" y="574.5" width="13" height="19" fill="url(#vg)" rx="4.5" stroke="#2a2a2a" stroke-width="1.1"/>
</g>
<line x1="791.5" y1="584" x2="800.5" y2="584" stroke="#555" stroke-width="1.1"/>
<text x="796" y="654.6" font-size="10.5" fill="#111" text-anchor="middle" stroke="#111" stroke-width="0.22">S</text>
<polygon points="819,629 827,584 819,584" fill="#9a9490"/>
<line x1="819" y1="573.7" x2="819" y2="637" stroke="#111" stroke-width="2"/>
<line x1="811" y1="584" x2="827" y2="584" stroke="#111" stroke-width="2"/>
<line x1="811" y1="629" x2="827" y2="629" stroke="#111" stroke-width="2"/>
<g filter="url(#sh)">
<rect x="812.5" y="574.5" width="13" height="19" fill="url(#vg)" rx="4.5" stroke="#2a2a2a" stroke-width="1.1"/>
</g>
<line x1="814.5" y1="584" x2="823.5" y2="584" stroke="#555" stroke-width="1.1"/>
<text x="819" y="654.6" font-size="10.5" fill="#111" text-anchor="middle" stroke="#111" stroke-width="0.22">R</text>
<rect x="1.5" y="659.8" width="1021" height="17.5" fill="#0e0e0e"/>
<text x="512" y="672.5" font-size="10.5" fill="#a0a0a0" text-anchor="middle">Surge</text>
<line x1="860" y1="121.7" x2="1010.6" y2="121.7" stroke="#acaec0" stroke-width="2"/>
<path d="M 937.6 134.6 L 943.5 134.6 L 943.5 157 M 937.6 179.8 L 943.5 179.8 L 943.5 157" stroke="#151515" stroke-width="1.2" fill="none"/>
<path d="M 943.5 143.1 L 888.8 143.1 M 943.5 170.3 L 888.8 170.3 M 907.9 157 L 916.2 157" stroke="#151515" stroke-width="1.2" fill="none"/>
<path d="M 937.6 156 L 946 156 M 937.6 158 L 946 158" stroke="#151515" stroke-width="1" fill="none"/>
<polygon points="944.5,153.5 944.5,160.5 948.6,157" fill="#151515"/>
<line x1="888.8" y1="143.1" x2="888.8" y2="146.5" stroke="#151515" stroke-width="1.2"/>
<polygon points="886.2,146 891.4,146 888.8,150" fill="#151515"/>
<line x1="888.8" y1="170.3" x2="888.8" y2="167" stroke="#151515" stroke-width="1.2"/>
<polygon points="886.2,167.5 891.4,167.5 888.8,163.6" fill="#151515"/>
<line x1="918.5" y1="143.1" x2="918.5" y2="146.5" stroke="#151515" stroke-width="1.2"/>
<polygon points="915.9,146 921.1,146 918.5,150" fill="#151515"/>
<line x1="918.5" y1="170.3" x2="918.5" y2="167" stroke="#151515" stroke-width="1.2"/>
<polygon points="915.9,167.5 921.1,167.5 918.5,163.6" fill="#151515"/>
<circle cx="952.9" cy="157" r="4.3" fill="#8a8a8a" stroke="#151515" stroke-width="1.2"/>
<line x1="950.9" y1="157" x2="954.9" y2="157" stroke="#eee" stroke-width="1"/>
<line x1="952.9" y1="155" x2="952.9" y2="159" stroke="#eee" stroke-width="1"/>
<path d="M 957.2 157 L 962.2 157 L 962.2 145.8 L 967.25 145.8 M 988.5 145.8 L 991 145.8 L 991 157 L 963.8 157 L 963.8 168.4 L 967.25 168.4 M 988.5 168.4 L 994.3 168.4 L 994.3 157 L 998 157" stroke="#151515" stroke-width="1.2" fill="none"/>
<polygon points="997,153.8 997,160.2 1001.3,157" fill="#151515"/>
<line x1="878.7" y1="134.6" x2="883.9" y2="134.6" stroke="#151515" stroke-width="1.2"/>
<polygon points="882.9,131.8 882.9,137.4 886.9,134.6" fill="#151515"/>
<line x1="907.9" y1="134.6" x2="913.2" y2="134.6" stroke="#151515" stroke-width="1.2"/>
<polygon points="912.2,131.8 912.2,137.4 916.2,134.6" fill="#151515"/>
<line x1="878.7" y1="179.8" x2="883.9" y2="179.8" stroke="#151515" stroke-width="1.2"/>
<polygon points="882.9,177 882.9,182.6 886.9,179.8" fill="#151515"/>
<line x1="907.9" y1="179.8" x2="913.2" y2="179.8" stroke="#151515" stroke-width="1.2"/>
<polygon points="912.2,177 912.2,182.6 916.2,179.8" fill="#151515"/>
<rect x="868.3" y="129.2" width="9.8" height="10.8" fill="#858585" stroke="#222" stroke-width="1.2"/>
<text x="873.2" y="137.6" font-size="7.4" fill="#eee" text-anchor="middle" font-weight="bold">A</text>
<rect x="868.3" y="174.5" width="9.8" height="10.5" fill="#858585" stroke="#222" stroke-width="1.2"/>
<text x="873.2" y="182.6" font-size="7.4" fill="#eee" text-anchor="middle" font-weight="bold">B</text>
<rect x="887.5" y="129.2" width="19.8" height="10.8" fill="#fdfdfd" stroke="#222" stroke-width="1.2"/>
<line x1="893.6" y1="134.6" x2="901.2" y2="134.6" stroke="#111" stroke-width="1.3"/>
<rect x="916.8" y="129.2" width="20.2" height="10.8" fill="#858585" stroke="#222" stroke-width="1.2"/>
<line x1="923.1" y1="134.6" x2="930.7" y2="134.6" stroke="#eee" stroke-width="1.3"/>
<rect x="887.5" y="151.85" width="19.8" height="10.55" fill="#858585" stroke="#222" stroke-width="1.2"/>
<line x1="893.6" y1="157.12" x2="901.2" y2="157.12" stroke="#eee" stroke-width="1.3"/>
<rect x="916.8" y="151.85" width="20.2" height="10.55" fill="#858585" stroke="#222" stroke-width="1.2"/>
<line x1="923.1" y1="157.12" x2="930.7" y2="157.12" stroke="#eee" stroke-width="1.3"/>
<rect x="887.5" y="174.5" width="19.8" height="10.5" fill="#858585" stroke="#222" stroke-width="1.2"/>
<line x1="893.6" y1="179.75" x2="901.2" y2="179.75" stroke="#eee" stroke-width="1.3"/>
<rect x="916.8" y="174.5" width="20.2" height="10.5" fill="#858585" stroke="#222" stroke-width="1.2"/>
<line x1="923.1" y1="179.75" x2="930.7" y2="179.75" stroke="#eee" stroke-width="1.3"/>
<rect x="967.85" y="140.6" width="20.05" height="10.05" fill="#858585" stroke="#222" stroke-width="1.2"/>
<line x1="974.08" y1="145.62" x2="981.67" y2="145.62" stroke="#eee" stroke-width="1.3"/>
<rect x="967.85" y="163.1" width="20.05" height="10.7" fill="#858585" stroke="#222" stroke-width="1.2"/>
<line x1="974.08" y1="168.45" x2="981.67" y2="168.45" stroke="#eee" stroke-width="1.3"/>
<polygon points="871.5,201 996.5,194 996.5,201" fill="#a2a2a4"/>
<line x1="866" y1="201" x2="1005" y2="201" stroke="#111" stroke-width="2"/>
<line x1="871.5" y1="193" x2="871.5" y2="209" stroke="#111" stroke-width="1"/>
<text x="994.7" y="213.5" font-size="10.8" fill="#1a1a1a" text-anchor="end" letter-spacing="0.05" stroke="#1a1a1a" stroke-width="0.22">FX1 Return</text>
<g filter="url(#sh)">
<rect x="988.5" y="194.5" width="20" height="14" fill="url(#hg)" rx="4.5" stroke="#2a2a2a" stroke-width="1.1"/>
</g>
<line x1="998.5" y1="196" x2="998.5" y2="207" stroke="#383838" stroke-width="1.1"/>
<polygon points="871.5,225 996.5,218 996.5,225" fill="#a2a2a4"/>
<line x1="866" y1="225" x2="1005" y2="225" stroke="#111" stroke-width="2"/>
<line x1="871.5" y1="217" x2="871.5" y2="233" stroke="#111" stroke-width="1"/>
<text x="994.7" y="236.7" font-size="10.8" fill="#1a1a1a" text-anchor="end" letter-spacing="0.05" stroke="#1a1a1a" stroke-width="0.22">FX2 Return</text>
<g filter="url(#sh)">
<rect x="988.5" y="218.5" width="20" height="14" fill="url(#hg)" rx="4.5" stroke="#2a2a2a" stroke-width="1.1"/>
</g>
<line x1="998.5" y1="220" x2="998.5" y2="231" stroke="#383838" stroke-width="1.1"/>
<line x1="860" y1="246.5" x2="1010.6" y2="246.5" stroke="#acaec0" stroke-width="2"/>
<rect x="867.6" y="257" width="135.9" height="10.7" fill="#f8f8f8" rx="5.3" stroke="#888" stroke-width="1"/>
<text x="871.6" y="265.8" font-size="10.6" fill="#111" letter-spacing="0.4" stroke="#111" stroke-width="0.22">A Insert 1</text>
<text x="992.7" y="265.8" font-size="10.6" fill="#111" text-anchor="end" stroke="#111" stroke-width="0.22">Off</text>
<polygon points="995.2,261.3 999.6,261.3 997.4,264.2" fill="#111"/>
<text x="921" y="652.5" font-size="10" fill="#111" text-anchor="end" stroke="#111" stroke-width="0.22">Zoom</text>
<rect x="922.4" y="642.7" width="41" height="12.1" fill="#efefef" rx="6" stroke="#777" stroke-width="1"/>
<line x1="942.9" y1="645.5" x2="942.9" y2="652" stroke="#aaa" stroke-width="1"/>
<line x1="929" y1="648.7" x2="935" y2="648.7" stroke="#111" stroke-width="2"/>
<line x1="950" y1="648.7" x2="956.5" y2="648.7" stroke="#111" stroke-width="2"/>
<line x1="953.2" y1="645.5" x2="953.2" y2="652" stroke="#111" stroke-width="2"/>
<rect x="967.6" y="642.7" width="41" height="12.1" fill="#efefef" rx="6" stroke="#777" stroke-width="1"/>
<text x="988.1" y="652.3" font-size="10" fill="#111" text-anchor="middle" stroke="#111" stroke-width="0.22">Menu</text>
</svg>
</body></html>
